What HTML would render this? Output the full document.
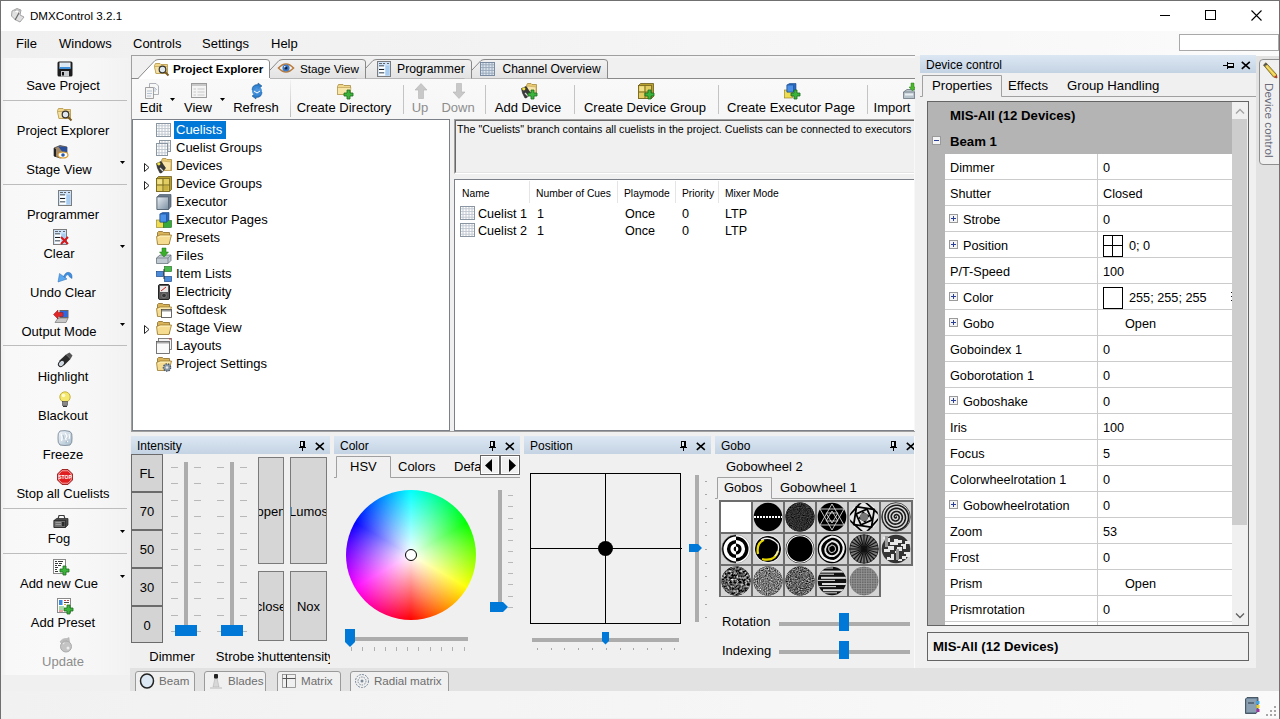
<!DOCTYPE html><html><head><meta charset="utf-8"><style>
*{margin:0;padding:0;box-sizing:border-box}
html,body{width:1280px;height:719px;overflow:hidden;background:#f0f0f0;font-family:"Liberation Sans",sans-serif;font-size:13px;color:#000}
.t{position:absolute;white-space:nowrap;line-height:16px}
svg{position:absolute;overflow:visible}
</style></head><body>
<div style="position:absolute;left:0px;top:0px;width:1280px;height:31px;background:#fff"></div>
<div class="t" style="left:30px;top:8px;font-size:11.6px">DMXControl 3.2.1</div>
<svg style="left:9px;top:7px" width="16" height="16" viewBox="0 0 16 16"><path d="M3 4 L8 1.5 L12 3 L11 8 L15 10 L11 15 L6 12.5 L2.5 9 Z" fill="#e0e0e0" stroke="#9a9a9a" stroke-width="0.9"/><path d="M5 4 Q8 2 10.5 3.5 L9.5 6" fill="#fff" stroke="#9a9a9a" stroke-width="0.8"/><path d="M6 13 L10 6" stroke="#666" stroke-width="1.2"/></svg>
<div style="position:absolute;left:1160px;top:15px;width:10px;height:1px;background:#000"></div>
<div style="position:absolute;left:1205px;top:10px;width:11px;height:10px;border:1px solid #000"></div>
<svg style="left:1251px;top:10px" width="11" height="11" viewBox="0 0 11 11"><path d="M0.5 0.5 L10.5 10.5 M10.5 0.5 L0.5 10.5" stroke="#000" stroke-width="1.1"/></svg>
<div style="position:absolute;left:1px;top:31px;width:1278px;height:27px;background:linear-gradient(90deg,#f0f0f0 0%,#f3f3f3 40%,#fbfbfb 100%)"></div>
<div class="t" style="left:16px;top:36px;">File</div>
<div class="t" style="left:59px;top:36px;">Windows</div>
<div class="t" style="left:133px;top:36px;">Controls</div>
<div class="t" style="left:202px;top:36px;">Settings</div>
<div class="t" style="left:271px;top:36px;">Help</div>
<div style="position:absolute;left:1179px;top:34px;width:100px;height:17px;background:#fff;border:1px solid #a9a9a9"></div>
<div style="position:absolute;left:1px;top:58px;width:129px;height:617px;background:linear-gradient(90deg,#f0f0f0 0%,#f8f8f8 4%,#f9f9f9 40%,#f6f6f6 75%,#f2f2f2 100%)"></div>
<div class="t" style="left:-37.0px;top:77.5px;width:200px;text-align:center;color:#000">Save Project</div>
<svg style="left:57px;top:61px" width="16" height="16" viewBox="0 0 16 16"><rect x="0.5" y="0.5" width="15" height="15" rx="1.5" fill="#1e1e1e"/><rect x="2.5" y="1.5" width="11" height="6" fill="#f4f8fc"/><rect x="2.5" y="6" width="11" height="2" fill="#3f8fd8"/><path d="M3.5 3 H12.5 M3.5 5 H12.5" stroke="#b6d0ea" stroke-width="0.8"/><rect x="4" y="10" width="8" height="5.5" fill="#c8ccd0"/><rect x="5" y="11" width="2" height="3.5" fill="#111"/></svg>
<div class="t" style="left:-37.0px;top:122.5px;width:200px;text-align:center;color:#000">Project Explorer</div>
<svg style="left:57px;top:106px" width="16" height="16" viewBox="0 0 16 16"><path d="M0.5 4.5 L1.5 2.5 H6 L7 3.5 H13.5 V12.5 H2 Z" fill="#f0d68a" stroke="#b49444" stroke-width="0.8"/><path d="M0.5 5.5 H13.5 L12.5 12.5 H2 Z" fill="#f6e3a4" stroke="#b49444" stroke-width="0.6"/><circle cx="8.5" cy="8.5" r="3.3" fill="#dfe8ee" stroke="#333" stroke-width="1.2"/><path d="M11 11 L14.5 14.5" stroke="#7a5a20" stroke-width="2"/></svg>
<div class="t" style="left:-41.0px;top:161.5px;width:200px;text-align:center;color:#000">Stage View</div>
<svg style="left:53px;top:145px" width="16" height="16" viewBox="0 0 16 16"><path d="M1 3 L7 0.5 L14 2 V11 L7 13 L1 11 Z" fill="#a08868" stroke="#3a3a3a" stroke-width="0.7"/><path d="M5 1.3 L14 2 V9 L11 9 Z" fill="#2a4e9a"/><path d="M1 3 L1 11 L3 12 V4 Z" fill="#222"/><ellipse cx="10" cy="10" rx="5" ry="3" fill="#fff" stroke="#d99a2a" stroke-width="1.2"/><circle cx="10" cy="10" r="1.8" fill="#2a5aa8"/></svg>
<svg style="left:120px;top:161px" width="6" height="4"><path d="M0 0 L5 0 L2.5 3 Z" fill="#000"/></svg>
<div class="t" style="left:-37.0px;top:206.5px;width:200px;text-align:center;color:#000">Programmer</div>
<svg style="left:57px;top:190px" width="16" height="16" viewBox="0 0 16 16"><rect x="1.5" y="0.5" width="13" height="15" fill="#cfe4f8" stroke="#7c7c7c"/><path d="M3 2.5 H6 M7 2.5 H9 M11 2.5 H13" stroke="#444" stroke-width="0.8"/><path d="M3 5 H8 M3 8.5 H8 M3 12 H8" stroke="#1a1a1a" stroke-width="1"/><rect x="3" y="5.5" width="6" height="2" fill="#fff"/><rect x="3" y="9" width="6" height="2" fill="#fff"/><rect x="3" y="12.5" width="6" height="2" fill="#fff"/><rect x="9.5" y="4.5" width="4" height="10" fill="#a8ccf0"/></svg>
<div class="t" style="left:-41.0px;top:245.5px;width:200px;text-align:center;color:#000">Clear</div>
<svg style="left:53px;top:229px" width="16" height="16" viewBox="0 0 16 16"><rect x="0.5" y="0.5" width="13" height="15" fill="#cfe4f8" stroke="#7c7c7c"/><path d="M2 2.5 H5 M6 2.5 H8 M10 2.5 H12" stroke="#444" stroke-width="0.8"/><path d="M2 5 H7 M2 8.5 H7 M2 12 H7" stroke="#1a1a1a" stroke-width="1"/><rect x="2" y="5.5" width="6" height="2" fill="#fff"/><rect x="2" y="9" width="6" height="2" fill="#fff"/><rect x="2" y="12.5" width="6" height="2" fill="#fff"/><rect x="8.5" y="4.5" width="4" height="10" fill="#a8ccf0"/><path d="M8 8 L15 15 M15 8 L8 15" stroke="#d81818" stroke-width="2"/></svg>
<svg style="left:120px;top:245px" width="6" height="4"><path d="M0 0 L5 0 L2.5 3 Z" fill="#000"/></svg>
<div class="t" style="left:-37.0px;top:284.5px;width:200px;text-align:center;color:#000">Undo Clear</div>
<svg style="left:57px;top:268px" width="16" height="16" viewBox="0 0 16 16"><path d="M6 9.5 Q9 2.5 13.5 5 Q15.5 6.5 15 10.5 L12.5 9 Q12.5 7 10.5 6.8 Q8.5 7 8 10.5 Z" fill="#3f8fe0" stroke="#2a6ab0" stroke-width="0.5"/><path d="M1 14 L2.5 5.5 L10 11 Z" fill="#5aa8f0" stroke="#2a6ab0" stroke-width="0.5"/></svg>
<div class="t" style="left:-41.0px;top:323.5px;width:200px;text-align:center;color:#000">Output Mode</div>
<svg style="left:53px;top:307px" width="16" height="16" viewBox="0 0 16 16"><rect x="7" y="3.5" width="8" height="7" fill="#2a6ae8" stroke="#666" stroke-width="1"/><path d="M2 15.5 L5 11 H15 L13 15.5 Z" fill="#c8c8c8" stroke="#777" stroke-width="0.7"/><path d="M0.5 7.5 L5 3 V5.5 H10 V9.5 H5 V12 Z" fill="#e02828" stroke="#901010" stroke-width="0.5"/></svg>
<svg style="left:120px;top:323px" width="6" height="4"><path d="M0 0 L5 0 L2.5 3 Z" fill="#000"/></svg>
<div class="t" style="left:-37.0px;top:368.5px;width:200px;text-align:center;color:#000">Highlight</div>
<svg style="left:57px;top:352px" width="16" height="16" viewBox="0 0 16 16"><path d="M2 9 L9 2.5 L13.5 7 L7 13.5 Z" fill="#2a2a2a"/><path d="M9 2.5 L12.5 0.5 L15.5 3.5 L13.5 7 Z" fill="#555"/><ellipse cx="4.5" cy="11.5" rx="3.5" ry="2.5" transform="rotate(-45 4.5 11.5)" fill="#cfd8e0" stroke="#222"/></svg>
<div class="t" style="left:-37.0px;top:407.5px;width:200px;text-align:center;color:#000">Blackout</div>
<svg style="left:57px;top:391px" width="16" height="16" viewBox="0 0 16 16"><circle cx="8" cy="6" r="5.2" fill="#f4e870" stroke="#b8a020" stroke-width="0.8"/><circle cx="6.5" cy="4.5" r="1.8" fill="#fffbd0"/><rect x="5.5" y="10.5" width="5" height="4" fill="#888" stroke="#444" stroke-width="0.6"/><path d="M6 15.5 H10" stroke="#333"/></svg>
<div class="t" style="left:-37.0px;top:446.5px;width:200px;text-align:center;color:#000">Freeze</div>
<svg style="left:57px;top:430px" width="16" height="16" viewBox="0 0 16 16"><defs><linearGradient id="frg" x1="0" y1="0" x2="1" y2="1"><stop offset="0" stop-color="#f4f8fc"/><stop offset="1" stop-color="#a8bccc"/></linearGradient></defs><path d="M3 1 Q8 0 13 1.5 Q15.5 3 15 8 Q15.5 13 13 15 Q8 16 3 15 Q0.5 13 1 8 Q0.5 3 3 1 Z" fill="url(#frg)" stroke="#7a8a9a" stroke-width="0.9"/><path d="M4 4 Q6 7 4.5 11 M8 3 L10 6 L8.5 9 L11 12 M12 4 Q13 7 12 9" stroke="#fff" stroke-width="1.1" fill="none"/><path d="M6 5 L7 9 M10 10 L9 13" stroke="#9aacbc" stroke-width="0.7" fill="none"/></svg>
<div class="t" style="left:-37.0px;top:485.5px;width:200px;text-align:center;color:#000">Stop all Cuelists</div>
<svg style="left:57px;top:469px" width="16" height="16" viewBox="0 0 16 16"><path d="M5 0.5 H11 L15.5 5 V11 L11 15.5 H5 L0.5 11 V5 Z" fill="#e02020" stroke="#8a1010" stroke-width="0.8"/><path d="M5 1.8 H11 L14.2 5 V11 L11 14.2 H5 L1.8 11 V5 Z" fill="none" stroke="#fff" stroke-width="0.6"/><text x="8" y="10" font-size="5" font-family="Liberation Sans" font-weight="bold" fill="#fff" text-anchor="middle">STOP</text></svg>
<div class="t" style="left:-41.0px;top:530.5px;width:200px;text-align:center;color:#000">Fog</div>
<svg style="left:53px;top:514px" width="16" height="16" viewBox="0 0 16 16"><path d="M1 6.5 L3.5 4.5 H15 V11 L12.5 13.5 H1 Z" fill="#4a4a4a" stroke="#222" stroke-width="0.7"/><rect x="1" y="6.5" width="11.5" height="7" fill="#6e6e6e" stroke="#222" stroke-width="0.7"/><path d="M2.5 8.5 H8 M2.5 10.5 H8" stroke="#a8a8a8" stroke-width="0.8"/><rect x="9" y="8" width="2.5" height="4" fill="#2a2a2a"/><path d="M5 5 L6 1.5 H11 L12 5" fill="none" stroke="#3a3a3a" stroke-width="1.1"/></svg>
<svg style="left:120px;top:530px" width="6" height="4"><path d="M0 0 L5 0 L2.5 3 Z" fill="#000"/></svg>
<div class="t" style="left:-41.0px;top:575.5px;width:200px;text-align:center;color:#000">Add new Cue</div>
<svg style="left:53px;top:559px" width="16" height="16" viewBox="0 0 16 16"><rect x="0.5" y="0.5" width="12" height="14" fill="#fff" stroke="#8a8a8a"/><path d="M2 2.5 H4 M5 2.5 H10 M2 4.5 H5 M6 4.5 H9 M2 6.5 H4 M5 6.5 H8 M2 8.5 H5 M2 10.5 H4 M2 12.5 H5" stroke="#3a3a3a" stroke-width="1" shape-rendering="crispEdges"/><path d="M10.0 7.0 h3 v3 h3 v3 h-3 v3 h-3 v-3 h-3 v-3 h3 z" fill="#3cb43c" stroke="#1d6b1d" stroke-width="0.8"/></svg>
<svg style="left:120px;top:575px" width="6" height="4"><path d="M0 0 L5 0 L2.5 3 Z" fill="#000"/></svg>
<div class="t" style="left:-37.0px;top:614.5px;width:200px;text-align:center;color:#000">Add Preset</div>
<svg style="left:57px;top:598px" width="16" height="16" viewBox="0 0 16 16"><rect x="0.5" y="0.5" width="13" height="14" fill="#fff" stroke="#8a8a8a"/><rect x="2" y="2" width="3.5" height="5" fill="#3a8ae0"/><path d="M7 2.5 H9 M10 2.5 H12" stroke="#d03030" stroke-width="0.9"/><path d="M7 4.5 H12" stroke="#333" stroke-width="0.9"/><path d="M7 6.5 H9" stroke="#c8a020" stroke-width="0.9"/><path d="M2 9 H7 M2 11 H6" stroke="#3aa83a" stroke-width="0.9"/><path d="M2 13 H6" stroke="#d03030" stroke-width="0.9"/><path d="M10.0 7.0 h3 v3 h3 v3 h-3 v3 h-3 v-3 h-3 v-3 h3 z" fill="#3cb43c" stroke="#1d6b1d" stroke-width="0.8"/></svg>
<div class="t" style="left:-37.0px;top:653.5px;width:200px;text-align:center;color:#8d8d8d">Update</div>
<svg style="left:57px;top:637px" width="16" height="16" viewBox="0 0 16 16"><path d="M3 5 Q5 1 10 1.5 L12 0.5 L12.5 5 L8 4.5 L9.5 3.5 Q6 3 4.5 6 Z" fill="#bdbdbd" stroke="#a8a8a8" stroke-width="0.5"/><circle cx="9" cy="9.5" r="5.5" fill="#c4c4c4" stroke="#ababab"/><path d="M6 7 L7.5 6" stroke="#eee" stroke-width="1"/><circle cx="11" cy="11" r="1.5" fill="#eee"/></svg>
<div style="position:absolute;left:3px;top:100px;width:124px;height:1px;background:#bdbdbd"></div>
<div style="position:absolute;left:3px;top:184px;width:124px;height:1px;background:#bdbdbd"></div>
<div style="position:absolute;left:3px;top:345px;width:124px;height:1px;background:#bdbdbd"></div>
<div style="position:absolute;left:3px;top:508px;width:124px;height:1px;background:#bdbdbd"></div>
<div style="position:absolute;left:3px;top:553px;width:124px;height:1px;background:#bdbdbd"></div>
<div style="position:absolute;left:131px;top:55px;width:784px;height:1px;background:#a0a0a0"></div>
<div style="position:absolute;left:131px;top:55px;width:1px;height:377px;background:#a0a0a0"></div>
<div style="position:absolute;left:131px;top:78px;width:784px;height:1px;background:#898989"></div>
<svg style="left:0;top:0" width="1280" height="100"><defs><linearGradient id="tabg" x1="0" y1="0" x2="0" y2="1"><stop offset="0" stop-color="#f2f2f2"/><stop offset="1" stop-color="#e3e3e3"/></linearGradient></defs><path d="M464 78.5 L481 60.5 Q483 59.5 485 59.5 L604 59.5 Q607.5 59.5 607.5 62 L607.5 78.5" fill="url(#tabg)" stroke="#898989" stroke-width="1"/></svg>
<svg style="left:480px;top:61px" width="16" height="16" viewBox="0 0 16 16"><rect x="0.5" y="1.5" width="14" height="13" fill="#dde6f0" stroke="#7a8aa0"/><path d="M3.0 2 V14" stroke="#9aaabb" stroke-width="1"/><path d="M6.0 2 V14" stroke="#9aaabb" stroke-width="1"/><path d="M9.0 2 V14" stroke="#9aaabb" stroke-width="1"/><path d="M12.0 2 V14" stroke="#9aaabb" stroke-width="1"/><path d="M1 3.8 H14" stroke="#9aaabb" stroke-width="1"/><path d="M1 6.6 H14" stroke="#9aaabb" stroke-width="1"/><path d="M1 9.4 H14" stroke="#9aaabb" stroke-width="1"/><path d="M1 12.2 H14" stroke="#9aaabb" stroke-width="1"/></svg>
<div class="t" style="left:502.5px;top:61px;font-size:12.0px">Channel Overview</div>
<svg style="left:0;top:0" width="1280" height="100"><defs><linearGradient id="tabg" x1="0" y1="0" x2="0" y2="1"><stop offset="0" stop-color="#f2f2f2"/><stop offset="1" stop-color="#e3e3e3"/></linearGradient></defs><path d="M356 78.5 L373 60.5 Q375 59.5 377 59.5 L468 59.5 Q471.5 59.5 471.5 62 L471.5 78.5" fill="url(#tabg)" stroke="#898989" stroke-width="1"/></svg>
<svg style="left:376px;top:61px" width="16" height="16" viewBox="0 0 16 16"><rect x="1.5" y="0.5" width="13" height="15" fill="#cfe4f8" stroke="#7c7c7c"/><path d="M3 2.5 H6 M7 2.5 H9 M11 2.5 H13" stroke="#444" stroke-width="0.8"/><path d="M3 5 H8 M3 8.5 H8 M3 12 H8" stroke="#1a1a1a" stroke-width="1"/><rect x="3" y="5.5" width="6" height="2" fill="#fff"/><rect x="3" y="9" width="6" height="2" fill="#fff"/><rect x="3" y="12.5" width="6" height="2" fill="#fff"/><rect x="9.5" y="4.5" width="4" height="10" fill="#a8ccf0"/></svg>
<div class="t" style="left:397px;top:61px;font-size:12.2px">Programmer</div>
<svg style="left:0;top:0" width="1280" height="100"><defs><linearGradient id="tabg" x1="0" y1="0" x2="0" y2="1"><stop offset="0" stop-color="#f2f2f2"/><stop offset="1" stop-color="#e3e3e3"/></linearGradient></defs><path d="M262 78.5 L279 60.5 Q281 59.5 283 59.5 L362 59.5 Q365.5 59.5 365.5 62 L365.5 78.5" fill="url(#tabg)" stroke="#898989" stroke-width="1"/></svg>
<svg style="left:278px;top:61px" width="16" height="16" viewBox="0 0 16 16"><path d="M0.5 7 Q8 -1 15.5 7 Q8 15 0.5 7 Z" fill="#f4f0ea" stroke="#b87a3a" stroke-width="1.6"/><circle cx="8" cy="7" r="3.6" fill="#3a78c8"/><circle cx="8" cy="7" r="1.5" fill="#102040"/><circle cx="6.8" cy="5.8" r="0.8" fill="#fff"/></svg>
<div class="t" style="left:300px;top:61px;font-size:11.7px">Stage View</div>
<svg style="left:0;top:0" width="1280" height="100"><defs><linearGradient id="tabg" x1="0" y1="0" x2="0" y2="1"><stop offset="0" stop-color="#f2f2f2"/><stop offset="1" stop-color="#e3e3e3"/></linearGradient></defs><path d="M138 78.5 L155 60.5 Q157 59.5 159 59.5 L266 59.5 Q269.5 59.5 269.5 62 L269.5 78.5" fill="#ffffff" stroke="#898989" stroke-width="1"/></svg>
<div style="position:absolute;left:139px;top:78px;width:131px;height:1px;background:#fff"></div>
<svg style="left:154px;top:61px" width="16" height="16" viewBox="0 0 16 16"><path d="M0.5 4.5 L1.5 2.5 H6 L7 3.5 H13.5 V12.5 H2 Z" fill="#f0d68a" stroke="#b49444" stroke-width="0.8"/><path d="M0.5 5.5 H13.5 L12.5 12.5 H2 Z" fill="#f6e3a4" stroke="#b49444" stroke-width="0.6"/><circle cx="8.5" cy="8.5" r="3.3" fill="#dfe8ee" stroke="#333" stroke-width="1.2"/><path d="M11 11 L14.5 14.5" stroke="#7a5a20" stroke-width="2"/></svg>
<div class="t" style="left:173px;top:61px;font-weight:bold;font-size:11.7px">Project Explorer</div>
<div style="position:absolute;left:132px;top:79px;width:783px;height:40px;background:linear-gradient(180deg,#f9f9f9,#f6f6f6)"></div>
<div class="t" style="left:51.0px;top:100px;width:200px;text-align:center;color:#000">Edit</div>
<svg style="left:145px;top:83px" width="16" height="16" viewBox="0 0 16 16"><path d="M4.5 0.5 H11 L13.5 3 V11.5 H4.5 Z" fill="#f8f8f8" stroke="#9aa0a8" stroke-width="0.8"/><path d="M0.5 4.5 H8.5 V15.5 H0.5 Z" fill="#f4f4f4" stroke="#8a8a8a" stroke-width="0.8"/><path d="M2 8 H7 M2 10.5 H7 M2 13 H6 M9 4 L12 7 M10 5 V9" stroke="#a8b8c8" stroke-width="0.8"/></svg>
<svg style="left:170px;top:98px" width="6" height="4"><path d="M0 0 L5 0 L2.5 3 Z" fill="#000"/></svg>
<div class="t" style="left:98.0px;top:100px;width:200px;text-align:center;color:#000">View</div>
<svg style="left:191px;top:83px" width="16" height="16" viewBox="0 0 16 16"><rect x="0.5" y="0.5" width="15" height="14" fill="#f4f4f4" stroke="#9a9a9a"/><rect x="1" y="1" width="14" height="2" fill="#c8c8c8"/><path d="M2.5 6 H5 M6.5 6 H13.5 M2.5 9 H5 M6.5 9 H13.5 M2.5 12 H5 M6.5 12 H13.5" stroke="#c8c8c8" stroke-width="1"/></svg>
<svg style="left:220px;top:98px" width="6" height="4"><path d="M0 0 L5 0 L2.5 3 Z" fill="#000"/></svg>
<div class="t" style="left:156.0px;top:100px;width:200px;text-align:center;color:#000">Refresh</div>
<svg style="left:249px;top:83px" width="16" height="16" viewBox="0 0 16 16"><path d="M3 7 Q3 1.5 9 1.5 L9 0 L13 3 L9 6 V4.3 Q5.5 4.3 5.5 7 Z" fill="#2a7ac8" stroke="#1a4a80" stroke-width="0.5"/><path d="M13 9 Q13 14.5 7 14.5 L7 16 L3 13 L7 10 V11.7 Q10.5 11.7 10.5 9 Z" fill="#2a7ac8" stroke="#1a4a80" stroke-width="0.5"/><circle cx="8" cy="8" r="5" fill="#3a8ad8" opacity="0.9"/><path d="M5 8 L8 10 L11 8" stroke="#fff" fill="none" stroke-width="1"/></svg>
<div class="t" style="left:244.0px;top:100px;width:200px;text-align:center;color:#000">Create Directory</div>
<svg style="left:337px;top:83px" width="16" height="16" viewBox="0 0 16 16"><path d="M0.5 3.5 L1.5 1.5 H6 L7 2.5 H13.5 V11.5 H0.5 Z" fill="#f0d68a" stroke="#a88a40" stroke-width="0.8"/><path d="M0.5 4.5 H14 L13 11.5 H0.5 Z" fill="#f8e6a8" stroke="#a88a40" stroke-width="0.5"/><path d="M10.0 7.0 h3 v3 h3 v3 h-3 v3 h-3 v-3 h-3 v-3 h3 z" fill="#3cb43c" stroke="#1d6b1d" stroke-width="0.8"/></svg>
<div class="t" style="left:320.0px;top:100px;width:200px;text-align:center;color:#8d8d8d">Up</div>
<svg style="left:413px;top:83px" width="16" height="16" viewBox="0 0 16 16"><path d="M8 0.5 L14 7 H10.5 V15.5 H5.5 V7 H2 Z" fill="#c8c8c8" stroke="#b4b4b4" stroke-width="0.6"/></svg>
<div class="t" style="left:358.0px;top:100px;width:200px;text-align:center;color:#8d8d8d">Down</div>
<svg style="left:451px;top:83px" width="16" height="16" viewBox="0 0 16 16"><path d="M8 15.5 L14 9 H10.5 V0.5 H5.5 V9 H2 Z" fill="#c8c8c8" stroke="#b4b4b4" stroke-width="0.6"/></svg>
<div class="t" style="left:428.0px;top:100px;width:200px;text-align:center;color:#000">Add Device</div>
<svg style="left:521px;top:83px" width="16" height="16" viewBox="0 0 16 16"><path d="M5.5 2.5 L6.5 0.5 H10 L11 1.5 H15.5 V12.5 H5.5 Z" fill="#e8c870" stroke="#a88a40" stroke-width="0.8"/><path d="M6 3 L15 4 L14.5 12.5 L7 12 Z" fill="#f8e4a8" stroke="#b89a50" stroke-width="0.5"/><path d="M0.5 5.5 L5 3.5 L9.5 10 L6 14.5 L4 15 L1.5 10 Z" fill="#3a3a3a" stroke="#222" stroke-width="0.6"/><circle cx="2.8" cy="5.8" r="1.6" fill="#f0e040"/><path d="M4 10 L7 13" stroke="#ddd" stroke-width="1.2"/><path d="M10.0 7.0 h3 v3 h3 v3 h-3 v3 h-3 v-3 h-3 v-3 h3 z" fill="#3cb43c" stroke="#1d6b1d" stroke-width="0.8"/></svg>
<div class="t" style="left:545.0px;top:100px;width:200px;text-align:center;color:#000">Create Device Group</div>
<svg style="left:638px;top:83px" width="16" height="16" viewBox="0 0 16 16"><path d="M0.5 2.5 L2.5 0.5 H15.5 V13.5 L13.5 15.5 H0.5 Z" fill="#b8a030" stroke="#5a4a10" stroke-width="0.7"/><rect x="0.5" y="2.5" width="13" height="13" fill="#e0cc60" stroke="#6a5a18" stroke-width="0.7"/><path d="M7 2.5 V15.5 M0.5 9 H13.5" stroke="#7a6a20" stroke-width="1"/><rect x="1.5" y="3.5" width="4.5" height="4.5" fill="#f0e08a"/><rect x="8" y="10" width="4.5" height="4.5" fill="#c8b040"/><path d="M10.0 7.0 h3 v3 h3 v3 h-3 v3 h-3 v-3 h-3 v-3 h3 z" fill="#3cb43c" stroke="#1d6b1d" stroke-width="0.8"/></svg>
<div class="t" style="left:691.0px;top:100px;width:200px;text-align:center;color:#000">Create Executor Page</div>
<svg style="left:784px;top:83px" width="16" height="16" viewBox="0 0 16 16"><rect x="0.5" y="7" width="8" height="8" fill="#f0dc50" stroke="#8a7a20" stroke-width="0.6"/><path d="M3 2 L5.5 0.5 H12 V7 L9.5 9 H3 Z" fill="#2a68c0" stroke="#1a4a8a" stroke-width="0.6"/><rect x="3" y="2" width="6.5" height="7" fill="#4a90e8" stroke="#1a4a8a" stroke-width="0.6"/><path d="M10.0 7.0 h3 v3 h3 v3 h-3 v3 h-3 v-3 h-3 v-3 h3 z" fill="#3cb43c" stroke="#1d6b1d" stroke-width="0.8"/></svg>
<div class="t" style="left:792.0px;top:100px;width:200px;text-align:center;color:#000">Import</div>
<svg style="left:903px;top:83px" width="16" height="16" viewBox="0 0 16 16"><path d="M0.5 9 L4 6.5 H14.5 V12.5 L11.5 15.5 H0.5 Z" fill="#b8c4cc" stroke="#5a6670" stroke-width="0.7"/><path d="M0.5 9 H11.5 L14.5 6.5 M11.5 9 V15.5" fill="none" stroke="#5a6670" stroke-width="0.6"/><rect x="2" y="10.5" width="8" height="2" fill="#e8eef2"/><path d="M8 0 H11 V4 H13 L9.5 8 L6 4 H8 Z" fill="#4ab82a" stroke="#2a7a1a" stroke-width="0.5"/></svg>
<div style="position:absolute;left:290px;top:80px;width:1px;height:37px;background:linear-gradient(180deg,#f2f2f2,#bcbcbc)"></div>
<div style="position:absolute;left:403px;top:85px;width:1px;height:29px;background:#c4c4c4"></div>
<div style="position:absolute;left:485px;top:85px;width:1px;height:29px;background:#c4c4c4"></div>
<div style="position:absolute;left:574px;top:85px;width:1px;height:29px;background:#c4c4c4"></div>
<div style="position:absolute;left:718px;top:85px;width:1px;height:29px;background:#c4c4c4"></div>
<div style="position:absolute;left:867px;top:85px;width:1px;height:29px;background:#c4c4c4"></div>
<div style="position:absolute;left:132px;top:119px;width:318px;height:312px;background:#fff;border:1px solid #7b8089"></div>
<div style="position:absolute;left:174px;top:121px;width:52px;height:18px;background:#0078d7"></div>
<div class="t" style="left:176px;top:122px;color:#fff">Cuelists</div>
<svg style="left:156px;top:122px" width="16" height="16" viewBox="0 0 16 16"><rect x="0.5" y="1.5" width="14" height="13" fill="#fff" stroke="#8a96a2"/><path d="M3.0 2 V14" stroke="#c0c8d0" stroke-width="1"/><path d="M6.0 2 V14" stroke="#c0c8d0" stroke-width="1"/><path d="M9.0 2 V14" stroke="#c0c8d0" stroke-width="1"/><path d="M12.0 2 V14" stroke="#c0c8d0" stroke-width="1"/><path d="M1 3.8 H14" stroke="#c0c8d0" stroke-width="1"/><path d="M1 6.6 H14" stroke="#c0c8d0" stroke-width="1"/><path d="M1 9.4 H14" stroke="#c0c8d0" stroke-width="1"/><path d="M1 12.2 H14" stroke="#c0c8d0" stroke-width="1"/></svg>
<div class="t" style="left:176px;top:140px;">Cuelist Groups</div>
<svg style="left:156px;top:140px" width="16" height="16" viewBox="0 0 16 16"><rect x="3.5" y="0.5" width="11" height="11" fill="#fff" stroke="#8a96a2"/><path d="M6.0 1 V11" stroke="#c0c8d0" stroke-width="1"/><path d="M9.0 1 V11" stroke="#c0c8d0" stroke-width="1"/><path d="M12.0 1 V11" stroke="#c0c8d0" stroke-width="1"/><path d="M4 3.0 H14" stroke="#c0c8d0" stroke-width="1"/><path d="M4 6.0 H14" stroke="#c0c8d0" stroke-width="1"/><path d="M4 9.0 H14" stroke="#c0c8d0" stroke-width="1"/><rect x="0.5" y="3.5" width="11" height="12" fill="#fff" stroke="#8a96a2"/><path d="M3.0 4 V15" stroke="#c0c8d0" stroke-width="1"/><path d="M6.0 4 V15" stroke="#c0c8d0" stroke-width="1"/><path d="M9.0 4 V15" stroke="#c0c8d0" stroke-width="1"/><path d="M1 6.2 H11" stroke="#c0c8d0" stroke-width="1"/><path d="M1 9.5 H11" stroke="#c0c8d0" stroke-width="1"/><path d="M1 12.8 H11" stroke="#c0c8d0" stroke-width="1"/></svg>
<div class="t" style="left:176px;top:158px;">Devices</div>
<svg style="left:156px;top:158px" width="16" height="16" viewBox="0 0 16 16"><path d="M5.5 2.5 L6.5 0.5 H10 L11 1.5 H15.5 V12.5 H5.5 Z" fill="#e8c870" stroke="#a88a40" stroke-width="0.8"/><path d="M6 3 L15 4 L14.5 12.5 L7 12 Z" fill="#f8e4a8" stroke="#b89a50" stroke-width="0.5"/><path d="M0.5 5.5 L5 3.5 L9.5 10 L6 14.5 L4 15 L1.5 10 Z" fill="#3a3a3a" stroke="#222" stroke-width="0.6"/><circle cx="2.8" cy="5.8" r="1.6" fill="#f0e040"/><path d="M4 10 L7 13" stroke="#ddd" stroke-width="1.2"/></svg>
<svg style="left:143px;top:163px" width="8" height="10"><path d="M1.5 0.5 L6 4.5 L1.5 8.5 Z" fill="#fff" stroke="#222" stroke-width="1"/></svg>
<div class="t" style="left:176px;top:176px;">Device Groups</div>
<svg style="left:156px;top:176px" width="16" height="16" viewBox="0 0 16 16"><path d="M0.5 2.5 L2.5 0.5 H15.5 V13.5 L13.5 15.5 H0.5 Z" fill="#b8a030" stroke="#5a4a10" stroke-width="0.7"/><rect x="0.5" y="2.5" width="13" height="13" fill="#e0cc60" stroke="#6a5a18" stroke-width="0.7"/><path d="M7 2.5 V15.5 M0.5 9 H13.5" stroke="#7a6a20" stroke-width="1"/><rect x="1.5" y="3.5" width="4.5" height="4.5" fill="#f0e08a"/><rect x="8" y="10" width="4.5" height="4.5" fill="#c8b040"/></svg>
<svg style="left:143px;top:181px" width="8" height="10"><path d="M1.5 0.5 L6 4.5 L1.5 8.5 Z" fill="#fff" stroke="#222" stroke-width="1"/></svg>
<div class="t" style="left:176px;top:194px;">Executor</div>
<svg style="left:156px;top:194px" width="16" height="16" viewBox="0 0 16 16"><defs><linearGradient id="exg" x1="0" y1="0" x2="1" y2="1"><stop offset="0" stop-color="#e8eef4"/><stop offset="1" stop-color="#7a8ea0"/></linearGradient></defs><path d="M1 3 L3.5 0.5 H15 V12.5 L12.5 15.5 H1 Z" fill="#6a7a8a" stroke="#4a5a6a" stroke-width="0.7"/><rect x="1" y="3" width="11.5" height="12.5" fill="url(#exg)" stroke="#4a5a6a" stroke-width="0.7"/></svg>
<div class="t" style="left:176px;top:212px;">Executor Pages</div>
<svg style="left:156px;top:212px" width="16" height="16" viewBox="0 0 16 16"><rect x="0.5" y="8" width="7.5" height="7.5" fill="#f0dc50" stroke="#8a7a20" stroke-width="0.6"/><rect x="7.5" y="8.5" width="8" height="7" fill="#38a838" stroke="#1a6a20" stroke-width="0.6"/><path d="M4 2 L6.5 0.5 H13 V8 L10.5 10 H4 Z" fill="#2a68c0" stroke="#1a4a8a" stroke-width="0.6"/><rect x="4" y="2" width="6.5" height="8" fill="#4a90e8" stroke="#1a4a8a" stroke-width="0.6"/></svg>
<div class="t" style="left:176px;top:230px;">Presets</div>
<svg style="left:156px;top:230px" width="16" height="16" viewBox="0 0 16 16"><path d="M1.5 2.5 L2.5 1.5 H6.5 L7.5 2.5 H13.5 V13.5 H1.5 Z" fill="#d9b458" stroke="#8a6a28" stroke-width="0.8"/><path d="M0.5 6.5 L4 5 H15.5 L13 14.5 H1.5 Z" fill="#f6dc90" stroke="#9a7a30" stroke-width="0.8"/><path d="M2 7.5 L4.5 6.2 H14" stroke="#fff4c8" stroke-width="0.8" fill="none"/></svg>
<div class="t" style="left:176px;top:248px;">Files</div>
<svg style="left:156px;top:248px" width="16" height="16" viewBox="0 0 16 16"><path d="M0.5 10 L4 7 H15 V12.5 L12 15.5 H0.5 Z" fill="#c0c8d0" stroke="#5a6670" stroke-width="0.7"/><path d="M0.5 10 H12 L15 7 M12 10 V15.5" fill="none" stroke="#5a6670" stroke-width="0.6"/><path d="M6 0 H10 V4 H12.5 L8 9 L3.5 4 H6 Z" fill="#3ab02a" stroke="#1a6a1a" stroke-width="0.5"/></svg>
<div class="t" style="left:176px;top:266px;">Item Lists</div>
<svg style="left:156px;top:266px" width="16" height="16" viewBox="0 0 16 16"><rect x="8.5" y="0.5" width="7" height="5" fill="#4ab84a" stroke="#2a7a2a" stroke-width="0.7"/><rect x="0.5" y="5.5" width="7" height="5" fill="#4a8ad8" stroke="#1a4a8a" stroke-width="0.7"/><rect x="8.5" y="10.5" width="7" height="5" fill="#4a8ad8" stroke="#1a4a8a" stroke-width="0.7"/><path d="M7.5 8 H8 M8 3 V13" stroke="#333" fill="none"/></svg>
<div class="t" style="left:176px;top:284px;">Electricity</div>
<svg style="left:156px;top:284px" width="16" height="16" viewBox="0 0 16 16"><rect x="2.5" y="0.5" width="11" height="15" rx="1.5" fill="#585858" stroke="#222"/><rect x="4" y="2" width="8" height="6" fill="#e8e8e8"/><path d="M5 7 L10 3" stroke="#d02020"/><circle cx="8" cy="11.5" r="2.3" fill="#333" stroke="#999" stroke-width="0.6"/></svg>
<div class="t" style="left:176px;top:302px;">Softdesk</div>
<svg style="left:156px;top:302px" width="16" height="16" viewBox="0 0 16 16"><path d="M1.5 2.5 L2.5 1.5 H6.5 L7.5 2.5 H13.5 V13.5 H1.5 Z" fill="#d9b458" stroke="#8a6a28" stroke-width="0.8"/><path d="M0.5 6.5 L4 5 H15.5 L13 14.5 H1.5 Z" fill="#f6dc90" stroke="#9a7a30" stroke-width="0.8"/><path d="M2 7.5 L4.5 6.2 H14" stroke="#fff4c8" stroke-width="0.8" fill="none"/><rect x="5.5" y="7.5" width="10" height="8" fill="#fff" stroke="#444" stroke-width="0.8"/><rect x="6" y="8" width="9" height="1.5" fill="#9a9a9a"/></svg>
<div class="t" style="left:176px;top:320px;">Stage View</div>
<svg style="left:156px;top:320px" width="16" height="16" viewBox="0 0 16 16"><path d="M1.5 2.5 L2.5 1.5 H6.5 L7.5 2.5 H13.5 V13.5 H1.5 Z" fill="#d9b458" stroke="#8a6a28" stroke-width="0.8"/><path d="M0.5 6.5 L4 5 H15.5 L13 14.5 H1.5 Z" fill="#f6dc90" stroke="#9a7a30" stroke-width="0.8"/><path d="M2 7.5 L4.5 6.2 H14" stroke="#fff4c8" stroke-width="0.8" fill="none"/></svg>
<svg style="left:143px;top:325px" width="8" height="10"><path d="M1.5 0.5 L6 4.5 L1.5 8.5 Z" fill="#fff" stroke="#222" stroke-width="1"/></svg>
<div class="t" style="left:176px;top:338px;">Layouts</div>
<svg style="left:156px;top:338px" width="16" height="16" viewBox="0 0 16 16"><rect x="2.5" y="0.5" width="13" height="11" fill="#f4f4f4" stroke="#666" stroke-width="0.8"/><path d="M13 1 H15" stroke="#d03030"/><rect x="0.5" y="3.5" width="13" height="12" fill="#fafafa" stroke="#555" stroke-width="0.8"/><rect x="1" y="4" width="12" height="1.5" fill="#aaa"/></svg>
<div class="t" style="left:176px;top:356px;">Project Settings</div>
<svg style="left:156px;top:356px" width="16" height="16" viewBox="0 0 16 16"><path d="M1.5 2.5 L2.5 1.5 H6.5 L7.5 2.5 H13.5 V13.5 H1.5 Z" fill="#d9b458" stroke="#8a6a28" stroke-width="0.8"/><path d="M0.5 6.5 L4 5 H15.5 L13 14.5 H1.5 Z" fill="#f6dc90" stroke="#9a7a30" stroke-width="0.8"/><path d="M2 7.5 L4.5 6.2 H14" stroke="#fff4c8" stroke-width="0.8" fill="none"/><circle cx="11" cy="11.5" r="3.6" fill="#8a9aaa" stroke="#4a5a6a" stroke-width="1.4" stroke-dasharray="1.5 1"/><circle cx="11" cy="11.5" r="1.3" fill="#e8e8e8"/></svg>
<div style="position:absolute;left:450px;top:119px;width:4px;height:312px;background:#f0f0f0"></div>
<div style="position:absolute;left:454px;top:119px;width:460px;height:55px;background:#f0f0f0;border-top:1px solid #a0a0a0;border-left:1px solid #a0a0a0;border-bottom:1px solid #fff"></div>
<div style="position:absolute;left:455px;top:120px;width:459px;height:53px;border-top:1px solid #696969;border-left:1px solid #696969;border-bottom:1px solid #e3e3e3"></div>
<div class="t" style="left:457px;top:121px;font-size:10.7px">The "Cuelists" branch contains all cuelists in the project. Cuelists can be connected to executors</div>
<div style="position:absolute;left:454px;top:179px;width:460px;height:252px;background:#fff;border-top:1px solid #7b8089;border-left:1px solid #7b8089;border-bottom:1px solid #7b8089"></div>
<div class="t" style="left:462px;top:186px;font-size:10.3px">Name</div>
<div class="t" style="left:536px;top:186px;font-size:10.3px">Number of Cues</div>
<div class="t" style="left:624px;top:186px;font-size:10.3px">Playmode</div>
<div class="t" style="left:682px;top:186px;font-size:10.3px">Priority</div>
<div class="t" style="left:725px;top:186px;font-size:10.3px">Mixer Mode</div>
<div style="position:absolute;left:529px;top:181px;width:1px;height:22px;background:#e5e5e5"></div>
<div style="position:absolute;left:617px;top:181px;width:1px;height:22px;background:#e5e5e5"></div>
<div style="position:absolute;left:675px;top:181px;width:1px;height:22px;background:#e5e5e5"></div>
<div style="position:absolute;left:718px;top:181px;width:1px;height:22px;background:#e5e5e5"></div>
<svg style="left:460px;top:205px" width="16" height="16" viewBox="0 0 16 16"><rect x="0.5" y="1.5" width="14" height="13" fill="#fff" stroke="#8a96a2"/><path d="M3.0 2 V14" stroke="#c0c8d0" stroke-width="1"/><path d="M6.0 2 V14" stroke="#c0c8d0" stroke-width="1"/><path d="M9.0 2 V14" stroke="#c0c8d0" stroke-width="1"/><path d="M12.0 2 V14" stroke="#c0c8d0" stroke-width="1"/><path d="M1 3.8 H14" stroke="#c0c8d0" stroke-width="1"/><path d="M1 6.6 H14" stroke="#c0c8d0" stroke-width="1"/><path d="M1 9.4 H14" stroke="#c0c8d0" stroke-width="1"/><path d="M1 12.2 H14" stroke="#c0c8d0" stroke-width="1"/></svg>
<div class="t" style="left:478px;top:206px;font-size:12.6px">Cuelist 1</div>
<div class="t" style="left:537px;top:206px;font-size:12.6px">1</div>
<div class="t" style="left:625px;top:206px;font-size:12.6px">Once</div>
<div class="t" style="left:682px;top:206px;font-size:12.6px">0</div>
<div class="t" style="left:725px;top:206px;font-size:12.6px">LTP</div>
<svg style="left:460px;top:222px" width="16" height="16" viewBox="0 0 16 16"><rect x="0.5" y="1.5" width="14" height="13" fill="#fff" stroke="#8a96a2"/><path d="M3.0 2 V14" stroke="#c0c8d0" stroke-width="1"/><path d="M6.0 2 V14" stroke="#c0c8d0" stroke-width="1"/><path d="M9.0 2 V14" stroke="#c0c8d0" stroke-width="1"/><path d="M12.0 2 V14" stroke="#c0c8d0" stroke-width="1"/><path d="M1 3.8 H14" stroke="#c0c8d0" stroke-width="1"/><path d="M1 6.6 H14" stroke="#c0c8d0" stroke-width="1"/><path d="M1 9.4 H14" stroke="#c0c8d0" stroke-width="1"/><path d="M1 12.2 H14" stroke="#c0c8d0" stroke-width="1"/></svg>
<div class="t" style="left:478px;top:223px;font-size:12.6px">Cuelist 2</div>
<div class="t" style="left:537px;top:223px;font-size:12.6px">1</div>
<div class="t" style="left:625px;top:223px;font-size:12.6px">Once</div>
<div class="t" style="left:682px;top:223px;font-size:12.6px">0</div>
<div class="t" style="left:725px;top:223px;font-size:12.6px">LTP</div>
<div style="position:absolute;left:131px;top:431px;width:784px;height:1px;background:#a0a0a0"></div>
<div style="position:absolute;left:131px;top:436px;width:199px;height:18px;background:linear-gradient(180deg,#dce7f3 0%,#c4d3e3 100%)"></div>
<div class="t" style="left:137px;top:438px;font-size:12px">Intensity</div>
<svg style="left:299px;top:441px" width="8" height="11" shape-rendering="crispEdges"><rect x="1" y="0" width="5" height="6" fill="#000"/><rect x="2" y="1" width="1.5" height="4" fill="#e4ecf4"/><rect x="0" y="6" width="7" height="1" fill="#000"/><rect x="3" y="7" width="1" height="3" fill="#000"/></svg>
<svg style="left:315px;top:442px" width="10" height="9" viewBox="0 0 10 9"><path d="M0.8 0.8 L8.8 7.8 M8.8 0.8 L0.8 7.8" stroke="#000" stroke-width="1.6"/></svg>
<div style="position:absolute;left:131px;top:454px;width:32px;height:38px;background:#d4d4d4;border:1px solid #6b6b6b"></div>
<div class="t" style="left:132.0px;top:465.5px;width:30px;text-align:center;font-size:13px">FL</div>
<div style="position:absolute;left:131px;top:492px;width:32px;height:38px;background:#d4d4d4;border:1px solid #6b6b6b"></div>
<div class="t" style="left:132.0px;top:503.5px;width:30px;text-align:center;font-size:13px">70</div>
<div style="position:absolute;left:131px;top:530px;width:32px;height:38px;background:#d4d4d4;border:1px solid #6b6b6b"></div>
<div class="t" style="left:132.0px;top:541.5px;width:30px;text-align:center;font-size:13px">50</div>
<div style="position:absolute;left:131px;top:568px;width:32px;height:38px;background:#d4d4d4;border:1px solid #6b6b6b"></div>
<div class="t" style="left:132.0px;top:579.5px;width:30px;text-align:center;font-size:13px">30</div>
<div style="position:absolute;left:131px;top:606px;width:32px;height:37px;background:#d4d4d4;border:1px solid #6b6b6b"></div>
<div class="t" style="left:132.0px;top:617.5px;width:30px;text-align:center;font-size:13px">0</div>
<div style="position:absolute;left:171px;top:467px;width:7px;height:1px;background:#b8b8b8"></div>
<div style="position:absolute;left:194px;top:467px;width:7px;height:1px;background:#b8b8b8"></div>
<div style="position:absolute;left:171px;top:483px;width:7px;height:1px;background:#b8b8b8"></div>
<div style="position:absolute;left:194px;top:483px;width:7px;height:1px;background:#b8b8b8"></div>
<div style="position:absolute;left:171px;top:500px;width:7px;height:1px;background:#b8b8b8"></div>
<div style="position:absolute;left:194px;top:500px;width:7px;height:1px;background:#b8b8b8"></div>
<div style="position:absolute;left:171px;top:516px;width:7px;height:1px;background:#b8b8b8"></div>
<div style="position:absolute;left:194px;top:516px;width:7px;height:1px;background:#b8b8b8"></div>
<div style="position:absolute;left:171px;top:533px;width:7px;height:1px;background:#b8b8b8"></div>
<div style="position:absolute;left:194px;top:533px;width:7px;height:1px;background:#b8b8b8"></div>
<div style="position:absolute;left:171px;top:549px;width:7px;height:1px;background:#b8b8b8"></div>
<div style="position:absolute;left:194px;top:549px;width:7px;height:1px;background:#b8b8b8"></div>
<div style="position:absolute;left:171px;top:565px;width:7px;height:1px;background:#b8b8b8"></div>
<div style="position:absolute;left:194px;top:565px;width:7px;height:1px;background:#b8b8b8"></div>
<div style="position:absolute;left:171px;top:582px;width:7px;height:1px;background:#b8b8b8"></div>
<div style="position:absolute;left:194px;top:582px;width:7px;height:1px;background:#b8b8b8"></div>
<div style="position:absolute;left:171px;top:598px;width:7px;height:1px;background:#b8b8b8"></div>
<div style="position:absolute;left:194px;top:598px;width:7px;height:1px;background:#b8b8b8"></div>
<div style="position:absolute;left:171px;top:615px;width:7px;height:1px;background:#b8b8b8"></div>
<div style="position:absolute;left:194px;top:615px;width:7px;height:1px;background:#b8b8b8"></div>
<div style="position:absolute;left:171px;top:631px;width:7px;height:1px;background:#b8b8b8"></div>
<div style="position:absolute;left:194px;top:631px;width:7px;height:1px;background:#b8b8b8"></div>
<div style="position:absolute;left:184px;top:462px;width:4px;height:165px;background:#acacac"></div>
<div style="position:absolute;left:175px;top:625px;width:22px;height:11px;background:#0078d7"></div>
<div style="position:absolute;left:217px;top:467px;width:7px;height:1px;background:#b8b8b8"></div>
<div style="position:absolute;left:240px;top:467px;width:7px;height:1px;background:#b8b8b8"></div>
<div style="position:absolute;left:217px;top:483px;width:7px;height:1px;background:#b8b8b8"></div>
<div style="position:absolute;left:240px;top:483px;width:7px;height:1px;background:#b8b8b8"></div>
<div style="position:absolute;left:217px;top:500px;width:7px;height:1px;background:#b8b8b8"></div>
<div style="position:absolute;left:240px;top:500px;width:7px;height:1px;background:#b8b8b8"></div>
<div style="position:absolute;left:217px;top:516px;width:7px;height:1px;background:#b8b8b8"></div>
<div style="position:absolute;left:240px;top:516px;width:7px;height:1px;background:#b8b8b8"></div>
<div style="position:absolute;left:217px;top:533px;width:7px;height:1px;background:#b8b8b8"></div>
<div style="position:absolute;left:240px;top:533px;width:7px;height:1px;background:#b8b8b8"></div>
<div style="position:absolute;left:217px;top:549px;width:7px;height:1px;background:#b8b8b8"></div>
<div style="position:absolute;left:240px;top:549px;width:7px;height:1px;background:#b8b8b8"></div>
<div style="position:absolute;left:217px;top:565px;width:7px;height:1px;background:#b8b8b8"></div>
<div style="position:absolute;left:240px;top:565px;width:7px;height:1px;background:#b8b8b8"></div>
<div style="position:absolute;left:217px;top:582px;width:7px;height:1px;background:#b8b8b8"></div>
<div style="position:absolute;left:240px;top:582px;width:7px;height:1px;background:#b8b8b8"></div>
<div style="position:absolute;left:217px;top:598px;width:7px;height:1px;background:#b8b8b8"></div>
<div style="position:absolute;left:240px;top:598px;width:7px;height:1px;background:#b8b8b8"></div>
<div style="position:absolute;left:217px;top:615px;width:7px;height:1px;background:#b8b8b8"></div>
<div style="position:absolute;left:240px;top:615px;width:7px;height:1px;background:#b8b8b8"></div>
<div style="position:absolute;left:217px;top:631px;width:7px;height:1px;background:#b8b8b8"></div>
<div style="position:absolute;left:240px;top:631px;width:7px;height:1px;background:#b8b8b8"></div>
<div style="position:absolute;left:230px;top:462px;width:4px;height:165px;background:#acacac"></div>
<div style="position:absolute;left:221px;top:625px;width:22px;height:11px;background:#0078d7"></div>
<div class="t" style="left:142.0px;top:649px;width:60px;text-align:center;">Dimmer</div>
<div class="t" style="left:205.0px;top:649px;width:60px;text-align:center;">Strobe</div>
<div style="position:absolute;left:258px;top:457px;width:26px;height:107px;background:#d6d6d6;border:1px solid #7a7a7a;overflow:hidden"><div class="t" style="left:-20px;right:-20px;top:45.5px;text-align:center">open</div></div>
<div style="position:absolute;left:290px;top:457px;width:37px;height:107px;background:#d6d6d6;border:1px solid #7a7a7a;overflow:hidden"><div class="t" style="left:-20px;right:-20px;top:45.5px;text-align:center">Lumos</div></div>
<div style="position:absolute;left:258px;top:571px;width:26px;height:70px;background:#d6d6d6;border:1px solid #7a7a7a;overflow:hidden"><div class="t" style="left:-20px;right:-20px;top:27.0px;text-align:center">close</div></div>
<div style="position:absolute;left:290px;top:571px;width:37px;height:70px;background:#d6d6d6;border:1px solid #7a7a7a;overflow:hidden"><div class="t" style="left:-20px;right:-20px;top:27.0px;text-align:center">Nox</div></div>
<div style="position:absolute;left:258px;top:649px;width:32px;height:18px;overflow:hidden"><div class="t" style="left:-20px;right:-20px;text-align:center">Shutter</div></div>
<div style="position:absolute;left:290px;top:649px;width:40px;height:18px;overflow:hidden"><div class="t" style="left:-20px;right:-20px;text-align:center">Intensity</div></div>
<div style="position:absolute;left:334px;top:436px;width:186px;height:18px;background:linear-gradient(180deg,#dce7f3 0%,#c4d3e3 100%)"></div>
<div class="t" style="left:340px;top:438px;font-size:12px">Color</div>
<svg style="left:489px;top:441px" width="8" height="11" shape-rendering="crispEdges"><rect x="1" y="0" width="5" height="6" fill="#000"/><rect x="2" y="1" width="1.5" height="4" fill="#e4ecf4"/><rect x="0" y="6" width="7" height="1" fill="#000"/><rect x="3" y="7" width="1" height="3" fill="#000"/></svg>
<svg style="left:505px;top:442px" width="10" height="9" viewBox="0 0 10 9"><path d="M0.8 0.8 L8.8 7.8 M8.8 0.8 L0.8 7.8" stroke="#000" stroke-width="1.6"/></svg>
<svg style="left:0;top:0" width="1280" height="719"><path d="M334 477.5 H336.5 V456.5 H390.5 V477.5 H520" fill="none" stroke="#a0a0a0" stroke-width="1"/></svg>
<div class="t" style="left:350px;top:459px;">HSV</div>
<div class="t" style="left:398px;top:459px;">Colors</div>
<div style="position:absolute;left:454px;top:456px;width:27px;height:20px;overflow:hidden"><div class="t" style="left:0;top:3px">Default</div></div>
<div style="position:absolute;left:480px;top:455px;width:20px;height:20px;background:#f0f0f0;border:1px solid #646464;box-shadow:inset 1px 1px 0 #fff,inset -1px -1px 0 #fff"></div>
<div style="position:absolute;left:500px;top:455px;width:20px;height:20px;background:#f0f0f0;border:1px solid #646464;box-shadow:inset 1px 1px 0 #fff,inset -1px -1px 0 #fff"></div>
<svg style="left:484px;top:459px" width="9" height="14"><path d="M8 0 V13 L1 6.5 Z" fill="#000"/></svg>
<svg style="left:509px;top:459px" width="9" height="14"><path d="M0 0 V13 L7 6.5 Z" fill="#000"/></svg>
<div style="position:absolute;left:346px;top:490px;width:130px;height:130px;border-radius:50%;background:conic-gradient(from 0deg,#00ffff,#00ff00 60deg,#ffff00 120deg,#ff0000 180deg,#ff00ff 240deg,#0000ff 300deg,#00ffff 360deg)"></div>
<div style="position:absolute;left:346px;top:490px;width:130px;height:130px;border-radius:50%;background:radial-gradient(circle closest-side,#fff 0%,rgba(255,255,255,0) 100%)"></div>
<div style="position:absolute;left:405px;top:549px;width:12px;height:12px;border-radius:50%;background:#fff;border:1px solid #000"></div>
<div style="position:absolute;left:498px;top:490px;width:4px;height:113px;background:#acacac"></div>
<div style="position:absolute;left:508px;top:495px;width:5px;height:1px;background:#b8b8b8"></div>
<div style="position:absolute;left:508px;top:506px;width:5px;height:1px;background:#b8b8b8"></div>
<div style="position:absolute;left:508px;top:518px;width:5px;height:1px;background:#b8b8b8"></div>
<div style="position:absolute;left:508px;top:529px;width:5px;height:1px;background:#b8b8b8"></div>
<div style="position:absolute;left:508px;top:540px;width:5px;height:1px;background:#b8b8b8"></div>
<div style="position:absolute;left:508px;top:551px;width:5px;height:1px;background:#b8b8b8"></div>
<div style="position:absolute;left:508px;top:562px;width:5px;height:1px;background:#b8b8b8"></div>
<div style="position:absolute;left:508px;top:573px;width:5px;height:1px;background:#b8b8b8"></div>
<div style="position:absolute;left:508px;top:584px;width:5px;height:1px;background:#b8b8b8"></div>
<div style="position:absolute;left:508px;top:596px;width:5px;height:1px;background:#b8b8b8"></div>
<div style="position:absolute;left:508px;top:607px;width:5px;height:1px;background:#b8b8b8"></div>
<svg style="left:490px;top:602px" width="19" height="11"><path d="M0 0 H13 L18 5 L13 10 H0 Z" fill="#0078d7"/></svg>
<div style="position:absolute;left:355px;top:637px;width:113px;height:4px;background:#acacac"></div>
<div style="position:absolute;left:351px;top:647px;width:1px;height:4px;background:#b0b0b0"></div>
<div style="position:absolute;left:362px;top:647px;width:1px;height:4px;background:#b0b0b0"></div>
<div style="position:absolute;left:374px;top:647px;width:1px;height:4px;background:#b0b0b0"></div>
<div style="position:absolute;left:385px;top:647px;width:1px;height:4px;background:#b0b0b0"></div>
<div style="position:absolute;left:396px;top:647px;width:1px;height:4px;background:#b0b0b0"></div>
<div style="position:absolute;left:407px;top:647px;width:1px;height:4px;background:#b0b0b0"></div>
<div style="position:absolute;left:418px;top:647px;width:1px;height:4px;background:#b0b0b0"></div>
<div style="position:absolute;left:430px;top:647px;width:1px;height:4px;background:#b0b0b0"></div>
<div style="position:absolute;left:441px;top:647px;width:1px;height:4px;background:#b0b0b0"></div>
<div style="position:absolute;left:452px;top:647px;width:1px;height:4px;background:#b0b0b0"></div>
<div style="position:absolute;left:464px;top:647px;width:1px;height:4px;background:#b0b0b0"></div>
<svg style="left:345px;top:629px" width="11" height="19"><path d="M0 0 H10 V13 L5 18 L0 13 Z" fill="#0078d7"/></svg>
<div style="position:absolute;left:524px;top:436px;width:187px;height:18px;background:linear-gradient(180deg,#dce7f3 0%,#c4d3e3 100%)"></div>
<div class="t" style="left:530px;top:438px;font-size:12px">Position</div>
<svg style="left:680px;top:441px" width="8" height="11" shape-rendering="crispEdges"><rect x="1" y="0" width="5" height="6" fill="#000"/><rect x="2" y="1" width="1.5" height="4" fill="#e4ecf4"/><rect x="0" y="6" width="7" height="1" fill="#000"/><rect x="3" y="7" width="1" height="3" fill="#000"/></svg>
<svg style="left:696px;top:442px" width="10" height="9" viewBox="0 0 10 9"><path d="M0.8 0.8 L8.8 7.8 M8.8 0.8 L0.8 7.8" stroke="#000" stroke-width="1.6"/></svg>
<div style="position:absolute;left:530px;top:473px;width:151px;height:151px;border:1px solid #000"></div>
<div style="position:absolute;left:605px;top:473px;width:1px;height:151px;background:#000"></div>
<div style="position:absolute;left:530px;top:548px;width:152px;height:1px;background:#000"></div>
<div style="position:absolute;left:598px;top:541px;width:15px;height:15px;border-radius:50%;background:#000"></div>
<div style="position:absolute;left:695px;top:475px;width:4px;height:147px;background:#acacac"></div>
<div style="position:absolute;left:705px;top:481px;width:2px;height:1px;background:#a8a8a8"></div>
<div style="position:absolute;left:705px;top:494px;width:2px;height:1px;background:#a8a8a8"></div>
<div style="position:absolute;left:705px;top:508px;width:2px;height:1px;background:#a8a8a8"></div>
<div style="position:absolute;left:705px;top:522px;width:2px;height:1px;background:#a8a8a8"></div>
<div style="position:absolute;left:705px;top:535px;width:2px;height:1px;background:#a8a8a8"></div>
<div style="position:absolute;left:705px;top:549px;width:2px;height:1px;background:#a8a8a8"></div>
<div style="position:absolute;left:705px;top:563px;width:2px;height:1px;background:#a8a8a8"></div>
<div style="position:absolute;left:705px;top:576px;width:2px;height:1px;background:#a8a8a8"></div>
<div style="position:absolute;left:705px;top:590px;width:2px;height:1px;background:#a8a8a8"></div>
<div style="position:absolute;left:705px;top:604px;width:2px;height:1px;background:#a8a8a8"></div>
<div style="position:absolute;left:705px;top:617px;width:2px;height:1px;background:#a8a8a8"></div>
<svg style="left:689px;top:544px" width="14" height="9"><path d="M0 0 H9 L13 4 L9 8 H0 Z" fill="#0078d7"/></svg>
<div style="position:absolute;left:532px;top:638px;width:147px;height:4px;background:#acacac"></div>
<div style="position:absolute;left:537px;top:648px;width:1px;height:2px;background:#a8a8a8"></div>
<div style="position:absolute;left:551px;top:648px;width:1px;height:2px;background:#a8a8a8"></div>
<div style="position:absolute;left:564px;top:648px;width:1px;height:2px;background:#a8a8a8"></div>
<div style="position:absolute;left:578px;top:648px;width:1px;height:2px;background:#a8a8a8"></div>
<div style="position:absolute;left:592px;top:648px;width:1px;height:2px;background:#a8a8a8"></div>
<div style="position:absolute;left:606px;top:648px;width:1px;height:2px;background:#a8a8a8"></div>
<div style="position:absolute;left:620px;top:648px;width:1px;height:2px;background:#a8a8a8"></div>
<div style="position:absolute;left:633px;top:648px;width:1px;height:2px;background:#a8a8a8"></div>
<div style="position:absolute;left:647px;top:648px;width:1px;height:2px;background:#a8a8a8"></div>
<div style="position:absolute;left:661px;top:648px;width:1px;height:2px;background:#a8a8a8"></div>
<div style="position:absolute;left:674px;top:648px;width:1px;height:2px;background:#a8a8a8"></div>
<svg style="left:602px;top:632px" width="8" height="13"><path d="M0 0 H7 V9 L3.5 12.5 L0 9 Z" fill="#0078d7"/></svg>
<div style="position:absolute;left:715px;top:436px;width:199px;height:18px;background:linear-gradient(180deg,#dce7f3 0%,#c4d3e3 100%)"></div>
<div class="t" style="left:721px;top:438px;font-size:12px">Gobo</div>
<svg style="left:890px;top:441px" width="8" height="11" shape-rendering="crispEdges"><rect x="1" y="0" width="5" height="6" fill="#000"/><rect x="2" y="1" width="1.5" height="4" fill="#e4ecf4"/><rect x="0" y="6" width="7" height="1" fill="#000"/><rect x="3" y="7" width="1" height="3" fill="#000"/></svg>
<svg style="left:906px;top:442px" width="10" height="9" viewBox="0 0 10 9"><path d="M0.8 0.8 L8.8 7.8 M8.8 0.8 L0.8 7.8" stroke="#000" stroke-width="1.6"/></svg>
<div style="position:absolute;left:914px;top:436px;width:1px;height:232px;background:#fafafa"></div>
<div class="t" style="left:726px;top:459px;">Gobowheel 2</div>
<svg style="left:0;top:0" width="1280" height="719"><path d="M715 498.5 H717.5 V477.5 H771.5 V498.5 H914" fill="none" stroke="#a0a0a0" stroke-width="1"/></svg>
<div class="t" style="left:724px;top:480px;">Gobos</div>
<div class="t" style="left:780px;top:480px;">Gobowheel 1</div>
<div style="position:absolute;left:719px;top:500px;width:194px;height:34px;background:#6d6d6d"></div>
<div style="position:absolute;left:719px;top:532px;width:194px;height:34px;background:#6d6d6d"></div>
<div style="position:absolute;left:719px;top:564px;width:162px;height:33px;background:#6d6d6d"></div>
<svg style="left:721px;top:502px" width="30" height="30" viewBox="0 0 30 30"><rect width="30" height="30" fill="#d4d4d4"/><rect width="30" height="30" fill="#fff"/></svg>
<svg style="left:753px;top:502px" width="30" height="30" viewBox="0 0 30 30"><rect width="30" height="30" fill="#d4d4d4"/><circle cx="15" cy="15" r="14.3" fill="#000"/><path d="M1 15 H29" stroke="#fff" stroke-width="2" stroke-dasharray="2 1"/></svg>
<svg style="left:785px;top:502px" width="30" height="30" viewBox="0 0 30 30"><rect width="30" height="30" fill="#d4d4d4"/><filter id="nf2" x="0" y="0" width="1" height="1" color-interpolation-filters="sRGB"><feTurbulence type="fractalNoise" baseFrequency="0.9" numOctaves="2" seed="2"/><feColorMatrix type="matrix" values="0.33 0.33 0.33 0 0 0.33 0.33 0.33 0 0 0.33 0.33 0.33 0 0 0 0 0 0 1"/><feComponentTransfer><feFuncR type="linear" slope="0.8" intercept="-0.22"/><feFuncG type="linear" slope="0.8" intercept="-0.22"/><feFuncB type="linear" slope="0.8" intercept="-0.22"/></feComponentTransfer></filter><clipPath id="nc2"><circle cx="15" cy="15" r="14.5"/></clipPath><g clip-path="url(#nc2)"><rect width="30" height="30" fill="#000"/><rect width="30" height="30" filter="url(#nf2)"/></g></svg>
<svg style="left:817px;top:502px" width="30" height="30" viewBox="0 0 30 30"><rect width="30" height="30" fill="#d4d4d4"/><circle cx="15" cy="15" r="14.3" fill="#000"/><path d="M15 2 L27 23 H3 Z M15 28 L3 7 H27 Z M15 9 L21 19 H9 Z M15 21 L9 11 H21 Z" fill="none" stroke="#d8d8d8" stroke-width="0.9"/></svg>
<svg style="left:849px;top:502px" width="30" height="30" viewBox="0 0 30 30"><rect width="30" height="30" fill="#d4d4d4"/><clipPath id="gc4"><circle cx="15" cy="15" r="14.3"/></clipPath><g clip-path="url(#gc4)"><rect width="30" height="30" fill="#e8e8e8"/><rect x="12" y="12" width="6" height="6" fill="none" stroke="#000" stroke-width="1.8" transform="rotate(33 15 15)"/><rect x="9" y="9" width="12" height="12" fill="none" stroke="#000" stroke-width="1.8" transform="rotate(66 15 15)"/><rect x="6" y="6" width="18" height="18" fill="none" stroke="#000" stroke-width="1.8" transform="rotate(99 15 15)"/><rect x="3" y="3" width="24" height="24" fill="none" stroke="#000" stroke-width="1.8" transform="rotate(132 15 15)"/><rect x="0" y="0" width="30" height="30" fill="none" stroke="#000" stroke-width="1.8" transform="rotate(165 15 15)"/><circle cx="15" cy="15" r="4" fill="#777"/></g></svg>
<svg style="left:881px;top:502px" width="30" height="30" viewBox="0 0 30 30"><rect width="30" height="30" fill="#d4d4d4"/><circle cx="15" cy="15" r="14.3" fill="#d8d8d8"/><clipPath id="gc5"><circle cx="15" cy="15" r="14.3"/></clipPath><g clip-path="url(#gc5)"><path d="M15 15 L15.07 15.01 L15.14 15.04 L15.20 15.10 L15.25 15.17 L15.27 15.26 L15.28 15.35 L15.26 15.46 L15.22 15.56 L15.15 15.66 L15.05 15.75 L14.93 15.82 L14.80 15.88 L14.64 15.91 L14.47 15.91 L14.29 15.88 L14.12 15.81 L13.94 15.71 L13.78 15.58 L13.64 15.41 L13.52 15.21 L13.43 14.99 L13.37 14.74 L13.36 14.48 L13.39 14.20 L13.46 13.93 L13.58 13.66 L13.75 13.40 L13.97 13.17 L14.23 12.97 L14.53 12.80 L14.86 12.68 L15.21 12.61 L15.58 12.59 L15.96 12.64 L16.34 12.75 L16.71 12.91 L17.06 13.14 L17.38 13.43 L17.65 13.77 L17.88 14.16 L18.05 14.59 L18.15 15.05 L18.18 15.54 L18.14 16.03 L18.01 16.52 L17.81 17.00 L17.54 17.45 L17.19 17.86 L16.77 18.22 L16.30 18.52 L15.77 18.75 L15.21 18.89 L14.62 18.96 L14.01 18.93 L13.41 18.81 L12.82 18.59 L12.26 18.28 L11.74 17.88 L11.29 17.41 L10.90 16.85 L10.60 16.24 L10.39 15.58 L10.28 14.88 L10.27 14.16 L10.38 13.44 L10.60 12.74 L10.93 12.06 L11.36 11.43 L11.89 10.87 L12.50 10.38 L13.20 9.99 L13.95 9.70 L14.75 9.53 L15.58 9.48 L16.42 9.56 L17.24 9.76 L18.04 10.09 L18.79 10.54 L19.47 11.11 L20.06 11.78 L20.56 12.54 L20.93 13.38 L21.18 14.28 L21.30 15.21 L21.27 16.16 L21.09 17.11 L20.78 18.03 L20.32 18.91 L19.73 19.71 L19.02 20.43 L18.19 21.03 L17.28 21.51 L16.30 21.85 L15.26 22.05 L14.20 22.08 L13.13 21.95 L12.08 21.66 L11.08 21.22 L10.14 20.62 L9.30 19.88 L8.57 19.01 L7.98 18.04 L7.53 16.97 L7.25 15.84 L7.13 14.67 L7.20 13.48 L7.44 12.31 L7.86 11.17 L8.45 10.10 L9.21 9.13 L10.10 8.27 L11.13 7.54 L12.26 6.98 L13.48 6.59 L14.75 6.38 L16.05 6.36 L17.35 6.55 L18.62 6.92 L19.83 7.49 L20.94 8.24 L21.94 9.16 L22.80 10.22 L23.50 11.41 L24.01 12.70 L24.33 14.07 L24.44 15.48 L24.33 16.90 L24.02 18.30 L23.49 19.64 L22.76 20.90 L21.84 22.05 L20.76 23.06 L19.52 23.89 L18.16 24.54 L16.72 24.98 L15.21 25.20 L13.67 25.19 L12.14 24.95 L10.66 24.48 L9.25 23.78 L7.95 22.88 L6.79 21.79 L5.81 20.52 L5.02 19.12 L4.44 17.60 L4.10 16.00 L3.99 14.35 L4.14 12.70 L4.54 11.08 L5.18 9.52 L6.05 8.07 L7.13 6.75 L8.41 5.61 L9.85 4.66 L11.43 3.94 L13.11 3.45 L14.86 3.23 L16.63 3.26 L18.39 3.57 L20.09 4.13 L21.70 4.95 L23.18 6.01 L24.48 7.29 L25.60 8.75 L26.48 10.38 L27.11 12.13 L27.48 13.96 L27.57 15.85 L27.38 17.73 L26.90 19.58 L26.15 21.34 L25.13 22.98 L23.88 24.46 L22.41 25.74 L20.75 26.80 L18.95 27.60 L17.03 28.12 L15.05 28.35 L13.04 28.28 L11.06 27.91 L9.14 27.24 L7.33 26.29 L5.68 25.08 L4.22 23.62 L2.99 21.95 L2.02 20.10 L1.33 18.12 L0.94 16.05 L0.87 13.93 L1.11 11.81 L1.67 9.74 L2.54 7.77 L3.71 5.95 L5.13 4.31 L6.80 2.89 L8.67 1.73 L10.70 0.86 L12.85 0.31 L15.07 0.08" fill="none" stroke="#1a1a1a" stroke-width="1.6"/></g><circle cx="15" cy="15" r="14.3" fill="none" stroke="#333" stroke-width="0.8"/></svg>
<svg style="left:721px;top:534px" width="30" height="30" viewBox="0 0 30 30"><rect width="30" height="30" fill="#d4d4d4"/><clipPath id="g6l"><rect x="0" y="0" width="15" height="30"/></clipPath><clipPath id="g6r"><rect x="15" y="0" width="15" height="30"/></clipPath><g clip-path="url(#g6r)"><circle cx="15" cy="15" r="14.3" fill="#fff"/><circle cx="15" cy="15" r="10.8" fill="none" stroke="#000" stroke-width="3.4"/><circle cx="15" cy="15" r="4" fill="none" stroke="#000" stroke-width="3.2"/></g><g clip-path="url(#g6l)"><circle cx="15" cy="15" r="14.3" fill="#000"/><circle cx="15" cy="15" r="10.8" fill="none" stroke="#fff" stroke-width="3.4"/><circle cx="15" cy="15" r="4" fill="none" stroke="#fff" stroke-width="3.2"/></g><circle cx="15" cy="15" r="14.3" fill="none" stroke="#999" stroke-width="0.6"/></svg>
<svg style="left:753px;top:534px" width="30" height="30" viewBox="0 0 30 30"><rect width="30" height="30" fill="#d4d4d4"/><circle cx="15" cy="15" r="14.3" fill="#cfcfcf"/><circle cx="15" cy="15" r="13" fill="#000"/><path d="M5 20 Q3 9 11 6" fill="none" stroke="#e8d800" stroke-width="2.3"/><path d="M9 25 Q22 28 25 17" fill="none" stroke="#e8d800" stroke-width="2.3"/><path d="M8 6 Q17 1 25 10 Q27 17 22 22" fill="none" stroke="#f0f0f0" stroke-width="1.3"/><circle cx="15" cy="15" r="13.8" fill="none" stroke="#eee" stroke-width="1"/></svg>
<svg style="left:785px;top:534px" width="30" height="30" viewBox="0 0 30 30"><rect width="30" height="30" fill="#d4d4d4"/><circle cx="15" cy="15" r="14.3" fill="#000"/><circle cx="15" cy="15" r="13.2" fill="none" stroke="#fff" stroke-width="1.1"/></svg>
<svg style="left:817px;top:534px" width="30" height="30" viewBox="0 0 30 30"><rect width="30" height="30" fill="#d4d4d4"/><circle cx="15" cy="15" r="14.3" fill="#000"/><path d="M15 2.5 Q21 3 24 7 Q28 12 26 18 Q23 25 17 27 Q10 27 6 23 Q2 18 3.5 12 Q6 5 15 2.5 Z" fill="none" stroke="#f4f4f4" stroke-width="2.2"/><path d="M15 7 Q21 8 22 13 Q23 19 17 22 Q11 23 8.5 18 Q7 11 15 7 Z" fill="none" stroke="#e8e8e8" stroke-width="1.8"/><path d="M15 11 Q19 12 18.5 16 Q17 19 14 18.5 Q11 17 12 13 Z" fill="none" stroke="#bbb" stroke-width="1.2"/></svg>
<svg style="left:849px;top:534px" width="30" height="30" viewBox="0 0 30 30"><rect width="30" height="30" fill="#d4d4d4"/><circle cx="15" cy="15" r="14.3" fill="#7a7a7a"/><path d="M15 15 L29.50 15.00" stroke="#111" stroke-width="1.2"/><path d="M15 15 L29.01 18.75" stroke="#111" stroke-width="1.2"/><path d="M15 15 L27.56 22.25" stroke="#111" stroke-width="1.2"/><path d="M15 15 L25.25 25.25" stroke="#111" stroke-width="1.2"/><path d="M15 15 L22.25 27.56" stroke="#111" stroke-width="1.2"/><path d="M15 15 L18.75 29.01" stroke="#111" stroke-width="1.2"/><path d="M15 15 L15.00 29.50" stroke="#111" stroke-width="1.2"/><path d="M15 15 L11.25 29.01" stroke="#111" stroke-width="1.2"/><path d="M15 15 L7.75 27.56" stroke="#111" stroke-width="1.2"/><path d="M15 15 L4.75 25.25" stroke="#111" stroke-width="1.2"/><path d="M15 15 L2.44 22.25" stroke="#111" stroke-width="1.2"/><path d="M15 15 L0.99 18.75" stroke="#111" stroke-width="1.2"/><path d="M15 15 L0.50 15.00" stroke="#111" stroke-width="1.2"/><path d="M15 15 L0.99 11.25" stroke="#111" stroke-width="1.2"/><path d="M15 15 L2.44 7.75" stroke="#111" stroke-width="1.2"/><path d="M15 15 L4.75 4.75" stroke="#111" stroke-width="1.2"/><path d="M15 15 L7.75 2.44" stroke="#111" stroke-width="1.2"/><path d="M15 15 L11.25 0.99" stroke="#111" stroke-width="1.2"/><path d="M15 15 L15.00 0.50" stroke="#111" stroke-width="1.2"/><path d="M15 15 L18.75 0.99" stroke="#111" stroke-width="1.2"/><path d="M15 15 L22.25 2.44" stroke="#111" stroke-width="1.2"/><path d="M15 15 L25.25 4.75" stroke="#111" stroke-width="1.2"/><path d="M15 15 L27.56 7.75" stroke="#111" stroke-width="1.2"/><path d="M15 15 L29.01 11.25" stroke="#111" stroke-width="1.2"/><circle cx="15" cy="15" r="14.3" fill="none" stroke="#222" stroke-width="0.8"/></svg>
<svg style="left:881px;top:534px" width="30" height="30" viewBox="0 0 30 30"><rect width="30" height="30" fill="#d4d4d4"/><circle cx="15" cy="15" r="14.3" fill="#333"/><rect x="2" y="3" width="3" height="2" fill="#e8e8e8"/><rect x="9" y="8" width="4" height="3" fill="#e8e8e8"/><rect x="16" y="13" width="5" height="4" fill="#e8e8e8"/><rect x="23" y="18" width="6" height="2" fill="#e8e8e8"/><rect x="6" y="23" width="3" height="3" fill="#e8e8e8"/><rect x="13" y="5" width="4" height="4" fill="#e8e8e8"/><rect x="20" y="10" width="5" height="2" fill="#e8e8e8"/><rect x="3" y="15" width="6" height="3" fill="#e8e8e8"/><rect x="10" y="20" width="3" height="4" fill="#e8e8e8"/><rect x="17" y="25" width="4" height="2" fill="#e8e8e8"/><rect x="24" y="7" width="5" height="3" fill="#e8e8e8"/><rect x="7" y="12" width="6" height="4" fill="#e8e8e8"/><rect x="14" y="17" width="3" height="2" fill="#e8e8e8"/><rect x="21" y="22" width="4" height="3" fill="#e8e8e8"/><rect x="4" y="4" width="5" height="4" fill="#e8e8e8"/><rect x="11" y="9" width="6" height="2" fill="#e8e8e8"/><rect x="18" y="14" width="3" height="3" fill="#e8e8e8"/><rect x="25" y="19" width="4" height="4" fill="#e8e8e8"/><rect x="8" y="24" width="5" height="2" fill="#e8e8e8"/><rect x="15" y="6" width="6" height="3" fill="#e8e8e8"/><rect x="22" y="11" width="3" height="4" fill="#e8e8e8"/><rect x="5" y="16" width="4" height="2" fill="#e8e8e8"/><rect x="4" y="2" width="3" height="3" fill="#999"/><rect x="15" y="15" width="3" height="3" fill="#999"/><rect x="4" y="4" width="3" height="3" fill="#999"/><rect x="15" y="17" width="3" height="3" fill="#999"/><rect x="4" y="6" width="3" height="3" fill="#999"/><rect x="15" y="19" width="3" height="3" fill="#999"/><rect x="4" y="8" width="3" height="3" fill="#999"/><rect x="15" y="21" width="3" height="3" fill="#999"/><rect x="4" y="10" width="3" height="3" fill="#999"/><rect x="15" y="23" width="3" height="3" fill="#999"/></svg>
<svg style="left:721px;top:566px" width="30" height="30" viewBox="0 0 30 30"><rect width="30" height="30" fill="#d4d4d4"/><filter id="nf12" x="0" y="0" width="1" height="1" color-interpolation-filters="sRGB"><feTurbulence type="fractalNoise" baseFrequency="0.45" numOctaves="2" seed="12"/><feColorMatrix type="matrix" values="0.33 0.33 0.33 0 0 0.33 0.33 0.33 0 0 0.33 0.33 0.33 0 0 0 0 0 0 1"/><feComponentTransfer><feFuncR type="linear" slope="3.0" intercept="-1.15"/><feFuncG type="linear" slope="3.0" intercept="-1.15"/><feFuncB type="linear" slope="3.0" intercept="-1.15"/></feComponentTransfer></filter><clipPath id="nc12"><circle cx="15" cy="15" r="14.5"/></clipPath><g clip-path="url(#nc12)"><rect width="30" height="30" fill="#000"/><rect width="30" height="30" filter="url(#nf12)"/></g></svg>
<svg style="left:753px;top:566px" width="30" height="30" viewBox="0 0 30 30"><rect width="30" height="30" fill="#d4d4d4"/><filter id="nf13" x="0" y="0" width="1" height="1" color-interpolation-filters="sRGB"><feTurbulence type="fractalNoise" baseFrequency="0.9" numOctaves="2" seed="13"/><feColorMatrix type="matrix" values="0.33 0.33 0.33 0 0 0.33 0.33 0.33 0 0 0.33 0.33 0.33 0 0 0 0 0 0 1"/><feComponentTransfer><feFuncR type="linear" slope="1.8" intercept="-0.42"/><feFuncG type="linear" slope="1.8" intercept="-0.42"/><feFuncB type="linear" slope="1.8" intercept="-0.42"/></feComponentTransfer></filter><clipPath id="nc13"><circle cx="15" cy="15" r="14.5"/></clipPath><g clip-path="url(#nc13)"><rect width="30" height="30" fill="#000"/><rect width="30" height="30" filter="url(#nf13)"/></g></svg>
<svg style="left:785px;top:566px" width="30" height="30" viewBox="0 0 30 30"><rect width="30" height="30" fill="#d4d4d4"/><filter id="nf14" x="0" y="0" width="1" height="1" color-interpolation-filters="sRGB"><feTurbulence type="fractalNoise" baseFrequency="0.9" numOctaves="2" seed="14"/><feColorMatrix type="matrix" values="0.33 0.33 0.33 0 0 0.33 0.33 0.33 0 0 0.33 0.33 0.33 0 0 0 0 0 0 1"/><feComponentTransfer><feFuncR type="linear" slope="1.8" intercept="-0.5"/><feFuncG type="linear" slope="1.8" intercept="-0.5"/><feFuncB type="linear" slope="1.8" intercept="-0.5"/></feComponentTransfer></filter><clipPath id="nc14"><circle cx="15" cy="15" r="14.5"/></clipPath><g clip-path="url(#nc14)"><rect width="30" height="30" fill="#000"/><rect width="30" height="30" filter="url(#nf14)"/></g></svg>
<svg style="left:817px;top:566px" width="30" height="30" viewBox="0 0 30 30"><rect width="30" height="30" fill="#d4d4d4"/><clipPath id="gc15"><circle cx="15" cy="15" r="14.3"/></clipPath><g clip-path="url(#gc15)"><rect width="30" height="30" fill="#111"/><rect x="-2" y="1.5" width="18" height="1" fill="#dcdcdc"/><rect x="3" y="4.6" width="25" height="2" fill="#dcdcdc"/><rect x="-1" y="7.7" width="18" height="1" fill="#dcdcdc"/><rect x="4" y="10.8" width="25" height="2" fill="#dcdcdc"/><rect x="0" y="13.9" width="18" height="1" fill="#dcdcdc"/><rect x="5" y="17.0" width="25" height="2" fill="#dcdcdc"/><rect x="1" y="20.1" width="18" height="1" fill="#dcdcdc"/><rect x="6" y="23.2" width="25" height="2" fill="#dcdcdc"/><rect x="2" y="26.3" width="18" height="1" fill="#dcdcdc"/></g></svg>
<svg style="left:849px;top:566px" width="30" height="30" viewBox="0 0 30 30"><rect width="30" height="30" fill="#d4d4d4"/><circle cx="15" cy="15" r="14.3" fill="#6a6a6a"/><clipPath id="gc16"><circle cx="15" cy="15" r="14.3"/></clipPath><g clip-path="url(#gc16)"><path d="M0.0 0 V30 M0 0.0 H30" stroke="#9a9a9a" stroke-width="0.7"/><path d="M2.5 0 V30 M0 2.5 H30" stroke="#9a9a9a" stroke-width="0.7"/><path d="M5.0 0 V30 M0 5.0 H30" stroke="#9a9a9a" stroke-width="0.7"/><path d="M7.5 0 V30 M0 7.5 H30" stroke="#9a9a9a" stroke-width="0.7"/><path d="M10.0 0 V30 M0 10.0 H30" stroke="#9a9a9a" stroke-width="0.7"/><path d="M12.5 0 V30 M0 12.5 H30" stroke="#9a9a9a" stroke-width="0.7"/><path d="M15.0 0 V30 M0 15.0 H30" stroke="#9a9a9a" stroke-width="0.7"/><path d="M17.5 0 V30 M0 17.5 H30" stroke="#9a9a9a" stroke-width="0.7"/><path d="M20.0 0 V30 M0 20.0 H30" stroke="#9a9a9a" stroke-width="0.7"/><path d="M22.5 0 V30 M0 22.5 H30" stroke="#9a9a9a" stroke-width="0.7"/><path d="M25.0 0 V30 M0 25.0 H30" stroke="#9a9a9a" stroke-width="0.7"/><path d="M27.5 0 V30 M0 27.5 H30" stroke="#9a9a9a" stroke-width="0.7"/><path d="M30.0 0 V30 M0 30.0 H30" stroke="#9a9a9a" stroke-width="0.7"/></g></svg>
<div class="t" style="left:722px;top:614px;">Rotation</div>
<div class="t" style="left:722px;top:643px;">Indexing</div>
<div style="position:absolute;left:779px;top:622px;width:131px;height:4px;background:#acacac"></div>
<div style="position:absolute;left:779px;top:650px;width:131px;height:4px;background:#acacac"></div>
<div style="position:absolute;left:839px;top:613px;width:10px;height:18px;background:#0078d7"></div>
<div style="position:absolute;left:839px;top:641px;width:10px;height:18px;background:#0078d7"></div>
<div style="position:absolute;left:130px;top:668px;width:1149px;height:23px;background:#e2e2e2"></div>
<svg style="left:0;top:0" width="1280" height="719"><path d="M135.5 691 V674 Q135.5 671.5 138 671.5 H192 Q194.5 671.5 194.5 674 V691" fill="#f0f0f0" stroke="#9a9a9a" stroke-width="1"/></svg>
<div class="t" style="left:159px;top:673px;color:#6d6d6d;font-size:11.6px">Beam</div>
<svg style="left:139px;top:673px" width="16" height="16" viewBox="0 0 16 16"><ellipse cx="8" cy="8" rx="6.5" ry="7" fill="#dce8f4" stroke="#222" stroke-width="1.5"/></svg>
<svg style="left:0;top:0" width="1280" height="719"><path d="M204.5 691 V674 Q204.5 671.5 207 671.5 H263 Q265.5 671.5 265.5 674 V691" fill="#f0f0f0" stroke="#9a9a9a" stroke-width="1"/></svg>
<div class="t" style="left:228px;top:673px;color:#6d6d6d;font-size:11.6px">Blades</div>
<svg style="left:208px;top:673px" width="16" height="16" viewBox="0 0 16 16"><path d="M5 14 L7 5 H9 L11 14 Z" fill="#d8d8d8" stroke="#aaa" stroke-width="0.5"/><rect x="6" y="1" width="4" height="4.5" rx="1" fill="#222"/><path d="M2 15 H14" stroke="#ccc" stroke-width="1.5"/></svg>
<svg style="left:0;top:0" width="1280" height="719"><path d="M277.5 691 V674 Q277.5 671.5 280 671.5 H338 Q340.5 671.5 340.5 674 V691" fill="#f0f0f0" stroke="#9a9a9a" stroke-width="1"/></svg>
<div class="t" style="left:301px;top:673px;color:#6d6d6d;font-size:11.6px">Matrix</div>
<svg style="left:281px;top:673px" width="16" height="16" viewBox="0 0 16 16"><path d="M1 5.5 H15 M5.5 1 V15" stroke="#555" stroke-width="1"/><rect x="1.5" y="1.5" width="13" height="13" fill="none" stroke="#888" stroke-width="0.8"/></svg>
<svg style="left:0;top:0" width="1280" height="719"><path d="M350.5 691 V674 Q350.5 671.5 353 671.5 H446 Q448.5 671.5 448.5 674 V691" fill="#f0f0f0" stroke="#9a9a9a" stroke-width="1"/></svg>
<div class="t" style="left:374px;top:673px;color:#6d6d6d;font-size:11.6px">Radial matrix</div>
<svg style="left:354px;top:673px" width="16" height="16" viewBox="0 0 16 16"><circle cx="8" cy="8" r="6.5" fill="none" stroke="#7a8a9a" stroke-width="1" stroke-dasharray="2 1"/><circle cx="8" cy="8" r="4" fill="none" stroke="#7a8a9a" stroke-width="1" stroke-dasharray="1.5 1"/><circle cx="8" cy="8" r="1.5" fill="#7a8a9a"/></svg>
<div style="position:absolute;left:1px;top:691px;width:1278px;height:28px;background:linear-gradient(90deg,#f1f1f1,#f5f5f5 50%,#fafafa)"></div>
<svg style="left:1245px;top:697px" width="16" height="17" viewBox="0 0 16 17"><path d="M0.5 2 L2 0.5 H13 V14 L11 16.5 H0.5 Z" fill="#6a8296" stroke="#2e3e4c" stroke-width="0.8"/><rect x="1.5" y="2" width="10" height="13" fill="#8aa0b2"/><path d="M3 6 H9" stroke="#4a5a6a" stroke-width="1.5"/><rect x="11.5" y="4" width="3" height="3" fill="#3aa8e8"/><rect x="11.5" y="8" width="3" height="3" fill="#f0d020"/><rect x="11.5" y="12" width="3" height="3" fill="#a030a0"/></svg>
<div style="position:absolute;left:1274px;top:706px;width:2px;height:2px;background:#a6a6a6"></div>
<div style="position:absolute;left:1270px;top:710px;width:2px;height:2px;background:#a6a6a6"></div>
<div style="position:absolute;left:1274px;top:710px;width:2px;height:2px;background:#a6a6a6"></div>
<div style="position:absolute;left:1266px;top:714px;width:2px;height:2px;background:#a6a6a6"></div>
<div style="position:absolute;left:1270px;top:714px;width:2px;height:2px;background:#a6a6a6"></div>
<div style="position:absolute;left:1274px;top:714px;width:2px;height:2px;background:#a6a6a6"></div>
<div style="position:absolute;left:0px;top:718px;width:1280px;height:1px;background:#f0f0f0"></div>
<div style="position:absolute;left:920px;top:56px;width:336px;height:612px;background:#f0f0f0"></div>
<div style="position:absolute;left:1256px;top:56px;width:23px;height:612px;background:#e2e2e2"></div>
<div style="position:absolute;left:920px;top:55px;width:336px;height:18px;background:linear-gradient(180deg,#dce7f3 0%,#c4d3e3 100%)"></div>
<div class="t" style="left:926px;top:57px;font-size:12px">Device control</div>
<svg style="left:1223px;top:62px" width="12" height="8" shape-rendering="crispEdges"><rect x="0" y="3" width="4" height="1" fill="#000"/><rect x="4" y="0" width="1" height="7" fill="#000"/><rect x="5" y="1" width="6" height="5" fill="#000"/><rect x="5" y="2" width="5" height="2" fill="#e4ecf4"/></svg>
<svg style="left:1241px;top:61px" width="10" height="9" viewBox="0 0 10 9"><path d="M0.8 0.8 L8.8 7.8 M8.8 0.8 L0.8 7.8" stroke="#000" stroke-width="1.6"/></svg>
<svg style="left:0;top:0" width="1280" height="719"><path d="M920 96.5 H922.5 V75.5 H1001.5 V96.5 H1256" fill="none" stroke="#a0a0a0" stroke-width="1"/></svg>
<div class="t" style="left:932px;top:78px;font-size:13.2px">Properties</div>
<div class="t" style="left:1008px;top:78px;font-size:13.2px">Effects</div>
<div class="t" style="left:1067px;top:78px;font-size:13.2px">Group Handling</div>
<div style="position:absolute;left:927px;top:101px;width:322px;height:525px;background:#b4b4b4;border:1px solid #646464"></div>
<div style="position:absolute;left:928px;top:102px;width:304px;height:52px;background:#b4b4b4"></div>
<div class="t" style="left:950px;top:108px;font-weight:bold;font-size:13.2px">MIS-All (12 Devices)</div>
<div class="t" style="left:950px;top:134px;font-weight:bold;font-size:13.2px">Beam 1</div>
<svg style="left:932px;top:136px" width="9" height="9"><rect x="0.5" y="0.5" width="8" height="8" fill="#f4f4f4" stroke="#9a9a9a"/><path d="M2 4.5 H7" stroke="#2a3f9a"/></svg>
<div style="position:absolute;left:945px;top:154px;width:287px;height:471px;overflow:hidden;background:#fff">
<div style="position:absolute;left:0;top:25px;width:287px;height:1px;background:#cbcbcb"></div>
<div class="t" style="left:5px;top:5px;font-size:12.7px;margin-top:1px">Dimmer</div>
<div class="t" style="left:158px;top:5px;font-size:12.7px;margin-top:1px">0</div>
<div style="position:absolute;left:0;top:51px;width:287px;height:1px;background:#cbcbcb"></div>
<div class="t" style="left:5px;top:31px;font-size:12.7px;margin-top:1px">Shutter</div>
<div class="t" style="left:158px;top:31px;font-size:12.7px;margin-top:1px">Closed</div>
<div style="position:absolute;left:0;top:77px;width:287px;height:1px;background:#cbcbcb"></div>
<svg style="left:4px;top:60px" width="9" height="9"><rect x="0.5" y="0.5" width="8" height="8" fill="#f4f4f4" stroke="#9a9a9a"/><path d="M2 4.5 H7 M4.5 2 V7" stroke="#2a3f9a"/></svg>
<div class="t" style="left:18px;top:57px;font-size:12.7px;margin-top:1px">Strobe</div>
<div class="t" style="left:158px;top:57px;font-size:12.7px;margin-top:1px">0</div>
<div style="position:absolute;left:0;top:103px;width:287px;height:1px;background:#cbcbcb"></div>
<svg style="left:4px;top:86px" width="9" height="9"><rect x="0.5" y="0.5" width="8" height="8" fill="#f4f4f4" stroke="#9a9a9a"/><path d="M2 4.5 H7 M4.5 2 V7" stroke="#2a3f9a"/></svg>
<div class="t" style="left:18px;top:83px;font-size:12.7px;margin-top:1px">Position</div>
<div style="position:absolute;left:158px;top:81px;width:20px;height:22px;border:1px solid #000;background:#fff"></div>
<div style="position:absolute;left:167px;top:81px;width:1px;height:22px;background:#000"></div>
<div style="position:absolute;left:158px;top:91px;width:20px;height:1px;background:#000"></div>
<div class="t" style="left:184px;top:83px;font-size:12.7px;margin-top:1px">0; 0</div>
<div style="position:absolute;left:0;top:129px;width:287px;height:1px;background:#cbcbcb"></div>
<div class="t" style="left:5px;top:109px;font-size:12.7px;margin-top:1px">P/T-Speed</div>
<div class="t" style="left:158px;top:109px;font-size:12.7px;margin-top:1px">100</div>
<div style="position:absolute;left:0;top:155px;width:287px;height:1px;background:#cbcbcb"></div>
<svg style="left:4px;top:138px" width="9" height="9"><rect x="0.5" y="0.5" width="8" height="8" fill="#f4f4f4" stroke="#9a9a9a"/><path d="M2 4.5 H7 M4.5 2 V7" stroke="#2a3f9a"/></svg>
<div class="t" style="left:18px;top:135px;font-size:12.7px;margin-top:1px">Color</div>
<div style="position:absolute;left:158px;top:133px;width:20px;height:22px;border:1px solid #000;background:#fff"></div>
<div style="position:absolute;left:286px;top:138px;width:1px;height:1px;background:#222"></div><div style="position:absolute;left:286px;top:142px;width:1px;height:1px;background:#223"></div><div style="position:absolute;left:286px;top:146px;width:1px;height:1px;background:#223"></div>
<div class="t" style="left:184px;top:135px;font-size:12.7px;margin-top:1px">255; 255; 255</div>
<div style="position:absolute;left:0;top:181px;width:287px;height:1px;background:#cbcbcb"></div>
<svg style="left:4px;top:164px" width="9" height="9"><rect x="0.5" y="0.5" width="8" height="8" fill="#f4f4f4" stroke="#9a9a9a"/><path d="M2 4.5 H7 M4.5 2 V7" stroke="#2a3f9a"/></svg>
<div class="t" style="left:18px;top:161px;font-size:12.7px;margin-top:1px">Gobo</div>
<div class="t" style="left:180px;top:161px;font-size:12.7px;margin-top:1px">Open</div>
<div style="position:absolute;left:0;top:207px;width:287px;height:1px;background:#cbcbcb"></div>
<div class="t" style="left:5px;top:187px;font-size:12.7px;margin-top:1px">Goboindex 1</div>
<div class="t" style="left:158px;top:187px;font-size:12.7px;margin-top:1px">0</div>
<div style="position:absolute;left:0;top:233px;width:287px;height:1px;background:#cbcbcb"></div>
<div class="t" style="left:5px;top:213px;font-size:12.7px;margin-top:1px">Goborotation 1</div>
<div class="t" style="left:158px;top:213px;font-size:12.7px;margin-top:1px">0</div>
<div style="position:absolute;left:0;top:259px;width:287px;height:1px;background:#cbcbcb"></div>
<svg style="left:4px;top:242px" width="9" height="9"><rect x="0.5" y="0.5" width="8" height="8" fill="#f4f4f4" stroke="#9a9a9a"/><path d="M2 4.5 H7 M4.5 2 V7" stroke="#2a3f9a"/></svg>
<div class="t" style="left:18px;top:239px;font-size:12.7px;margin-top:1px">Goboshake</div>
<div class="t" style="left:158px;top:239px;font-size:12.7px;margin-top:1px">0</div>
<div style="position:absolute;left:0;top:285px;width:287px;height:1px;background:#cbcbcb"></div>
<div class="t" style="left:5px;top:265px;font-size:12.7px;margin-top:1px">Iris</div>
<div class="t" style="left:158px;top:265px;font-size:12.7px;margin-top:1px">100</div>
<div style="position:absolute;left:0;top:311px;width:287px;height:1px;background:#cbcbcb"></div>
<div class="t" style="left:5px;top:291px;font-size:12.7px;margin-top:1px">Focus</div>
<div class="t" style="left:158px;top:291px;font-size:12.7px;margin-top:1px">5</div>
<div style="position:absolute;left:0;top:337px;width:287px;height:1px;background:#cbcbcb"></div>
<div class="t" style="left:5px;top:317px;font-size:12.7px;margin-top:1px">Colorwheelrotation 1</div>
<div class="t" style="left:158px;top:317px;font-size:12.7px;margin-top:1px">0</div>
<div style="position:absolute;left:0;top:363px;width:287px;height:1px;background:#cbcbcb"></div>
<svg style="left:4px;top:346px" width="9" height="9"><rect x="0.5" y="0.5" width="8" height="8" fill="#f4f4f4" stroke="#9a9a9a"/><path d="M2 4.5 H7 M4.5 2 V7" stroke="#2a3f9a"/></svg>
<div class="t" style="left:18px;top:343px;font-size:12.7px;margin-top:1px">Gobowheelrotation</div>
<div class="t" style="left:158px;top:343px;font-size:12.7px;margin-top:1px">0</div>
<div style="position:absolute;left:0;top:389px;width:287px;height:1px;background:#cbcbcb"></div>
<div class="t" style="left:5px;top:369px;font-size:12.7px;margin-top:1px">Zoom</div>
<div class="t" style="left:158px;top:369px;font-size:12.7px;margin-top:1px">53</div>
<div style="position:absolute;left:0;top:415px;width:287px;height:1px;background:#cbcbcb"></div>
<div class="t" style="left:5px;top:395px;font-size:12.7px;margin-top:1px">Frost</div>
<div class="t" style="left:158px;top:395px;font-size:12.7px;margin-top:1px">0</div>
<div style="position:absolute;left:0;top:441px;width:287px;height:1px;background:#cbcbcb"></div>
<div class="t" style="left:5px;top:421px;font-size:12.7px;margin-top:1px">Prism</div>
<div class="t" style="left:180px;top:421px;font-size:12.7px;margin-top:1px">Open</div>
<div style="position:absolute;left:0;top:467px;width:287px;height:1px;background:#cbcbcb"></div>
<div class="t" style="left:5px;top:447px;font-size:12.7px;margin-top:1px">Prismrotation</div>
<div class="t" style="left:158px;top:447px;font-size:12.7px;margin-top:1px">0</div>
<div style="position:absolute;left:0;top:493px;width:287px;height:1px;background:#cbcbcb"></div>
<div class="t" style="left:5px;top:473px;font-size:12.7px;margin-top:1px"></div>
<div class="t" style="left:158px;top:473px;font-size:12.7px;margin-top:1px"></div>
<div style="position:absolute;left:152px;top:0;width:1px;height:471px;background:#cbcbcb"></div>
</div>
<div style="position:absolute;left:1232px;top:102px;width:16px;height:523px;background:#f0f0f0"></div>
<div style="position:absolute;left:1232px;top:119px;width:15px;height:406px;background:#cdcdcd"></div>
<svg style="left:1235px;top:108px" width="10" height="7"><path d="M1 5.5 L5 1.5 L9 5.5" fill="none" stroke="#a3a3a3" stroke-width="1.3"/></svg>
<svg style="left:1235px;top:612px" width="10" height="7"><path d="M1 1.5 L5 5.5 L9 1.5" fill="none" stroke="#606060" stroke-width="1.3"/></svg>
<div style="position:absolute;left:927px;top:632px;width:322px;height:29px;background:#f0f0f0;border:1px solid #646464"></div>
<div class="t" style="left:933px;top:639px;font-weight:bold;font-size:13.2px">MIS-All (12 Devices)</div>
<svg style="left:1259px;top:59px" width="21" height="107"><path d="M21 0.5 H4 Q0.5 0.5 0.5 4 V102 Q0.5 105.5 4 105.5 H21" fill="#f0f0f0" stroke="#8f8f8f"/></svg>
<div class="t" style="left:1261px;top:83px;transform-origin:0 0;transform:translate(16px,0) rotate(90deg);color:#6a6a7a;font-size:11.8px">Device control</div>
<svg style="left:1262px;top:62px" width="16" height="17" viewBox="0 0 16 17"><path d="M1.5 3 L4 0.8 L14.5 12.5 L15 16 L11.5 15 Z" fill="#e8c840" stroke="#6a5a20" stroke-width="0.8"/><path d="M1.5 3 L4 0.8 L5.5 2.5 L3 4.7 Z" fill="#555"/><path d="M12 15 L14.8 12.8 L15 16 Z" fill="#c03030"/><path d="M4 3.5 L13 13.5" stroke="#f8e890" stroke-width="1"/></svg>
<div style="position:absolute;left:914px;top:119px;width:1px;height:312px;background:#f8f8f8"></div>
<div style="position:absolute;left:915px;top:56px;width:5px;height:612px;background:#f0f0f0"></div>
<div style="position:absolute;left:0px;top:0px;width:1280px;height:1px;background:#707070"></div>
<div style="position:absolute;left:0px;top:0px;width:1px;height:719px;background:#707070"></div>
<div style="position:absolute;left:1279px;top:0px;width:1px;height:719px;background:#707070"></div>
</body></html>
